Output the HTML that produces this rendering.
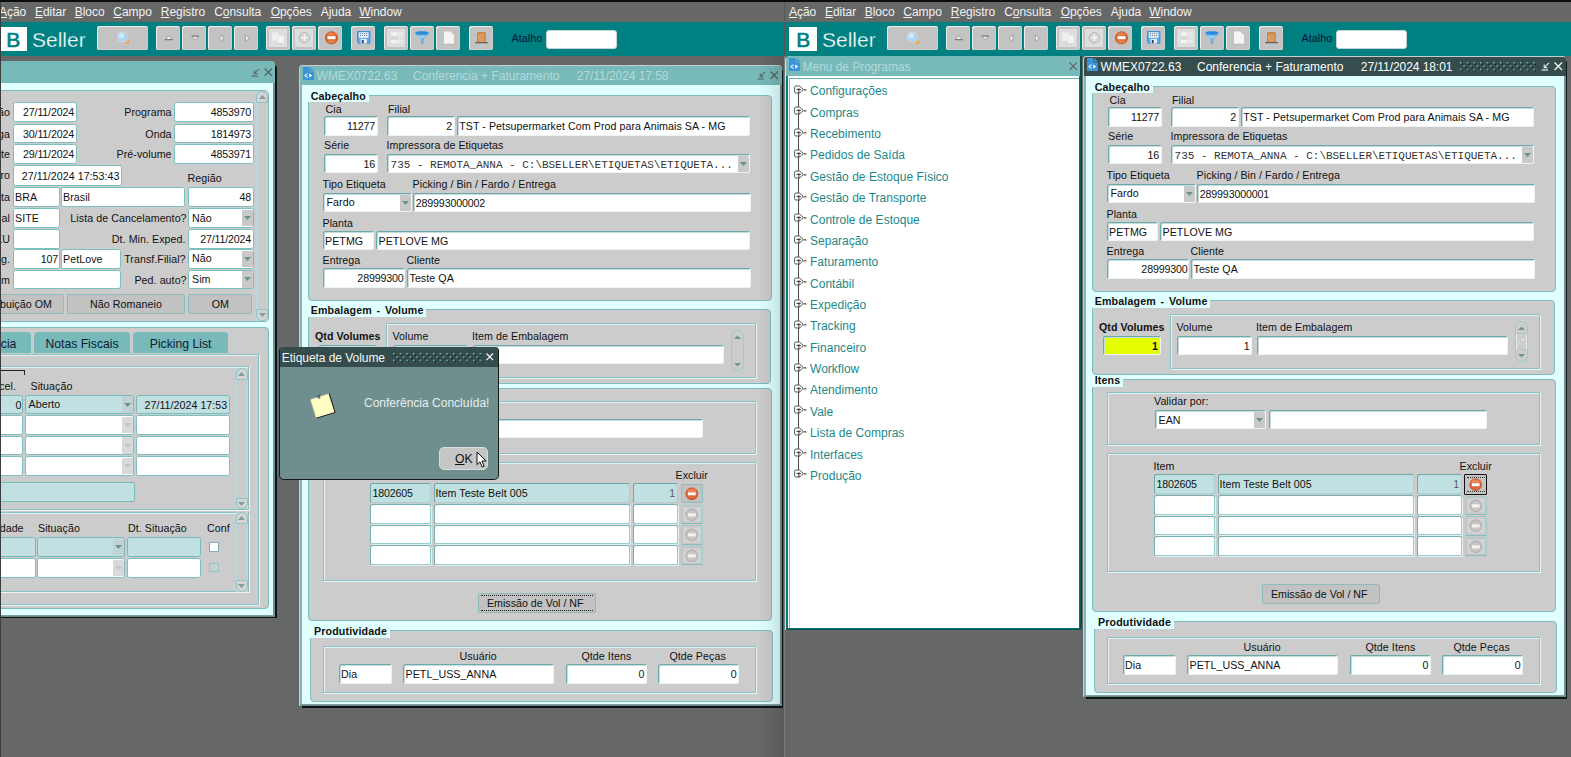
<!DOCTYPE html>
<html><head><meta charset="utf-8"><title>BSeller</title>
<style>
html,body{margin:0;padding:0;}
body{width:1571px;height:757px;overflow:hidden;background:#666867;position:relative;font-family:"Liberation Sans",sans-serif;font-size:11px;}
div,svg.a{position:absolute;}
.a{position:absolute;}
.t{white-space:nowrap;letter-spacing:0.06px;}
.m{font-family:"Liberation Mono",monospace;}
u{text-decoration:underline;text-underline-offset:1px;}
.f{box-sizing:border-box;background:#fff;border:1px solid;border-color:#6ea9a9 #eef4f4 #eef4f4 #6ea9a9;border-radius:2.5px;box-shadow:inset 1px 1px 0 #c4dede;}
.fm{box-sizing:border-box;background:#fff;border:1px solid;border-color:#74b0b0 #96cccc #96cccc #74b0b0;border-radius:2.5px;box-shadow:1px 1px 0 #e4eeee;}
.fs{box-sizing:border-box;background:#c1e0e1;border:1px solid;border-color:#6ea9a9 #a9d0d0 #a9d0d0 #6ea9a9;border-radius:2.5px;}
.g{box-sizing:border-box;background:#fff;border:1px solid #7cbfbf;border-radius:2.5px;}
.gs{box-sizing:border-box;background:#c1e0e1;border:1px solid #78baba;border-radius:2.5px;}
.gb{box-sizing:border-box;background:#cccccc;border:1px solid #7fbcbc;border-radius:4px;}
.fr{box-sizing:border-box;border:1px solid #86c2c2;border-radius:1px;box-shadow:inset 1px 1px 0 #e6f0f0,1px 1px 0 #eef4f4;}
.bt{box-sizing:border-box;background:#c2c2c2;border:1px solid #8cbcbc;border-radius:2px;}
.btd{box-sizing:border-box;background:#d3d3d3;border:1px solid #a2cccc;border-bottom-color:#84bcbc;border-radius:1.5px;box-shadow:inset 0 0 0 1.5px #c8c8c8;}
.ab{border-radius:0 1.5px 1.5px 0;}
.tb{background:#c3c3c3;border-radius:2.5px;box-shadow:inset 1px 1px 0 #ececec,inset -1px -1px 0 #cecece;}
.tbd{left:2.8px;top:2.8px;right:2.8px;bottom:2.8px;background:#dedede;}
</style></head><body>

<div class="a" style="left:0;top:0;width:783.6px;height:757px;overflow:hidden;">
<div class="a" style="left:-5.00px;top:0.00px;width:800.00px;height:757.00px;overflow:visible;">
<div style="left:0.00px;top:22.40px;width:800.00px;height:33.20px;background:#008080;"></div>
<div class="t" style="top:4.30px;font-size:12px;line-height:16px;color:#f2f2f2;letter-spacing:-0.04px;left:4.00px;"><u>A</u>ção</div>
<div class="t" style="top:4.30px;font-size:12px;line-height:16px;color:#f2f2f2;letter-spacing:-0.04px;left:40.00px;"><u>E</u>ditar</div>
<div class="t" style="top:4.30px;font-size:12px;line-height:16px;color:#f2f2f2;letter-spacing:-0.04px;left:79.70px;"><u>B</u>loco</div>
<div class="t" style="top:4.30px;font-size:12px;line-height:16px;color:#f2f2f2;letter-spacing:-0.04px;left:118.30px;"><u>C</u>ampo</div>
<div class="t" style="top:4.30px;font-size:12px;line-height:16px;color:#f2f2f2;letter-spacing:-0.04px;left:165.80px;"><u>R</u>egistro</div>
<div class="t" style="top:4.30px;font-size:12px;line-height:16px;color:#f2f2f2;letter-spacing:-0.04px;left:219.20px;">C<u>o</u>nsulta</div>
<div class="t" style="top:4.30px;font-size:12px;line-height:16px;color:#f2f2f2;letter-spacing:-0.04px;left:275.70px;"><u>O</u>pções</div>
<div class="t" style="top:4.30px;font-size:12px;line-height:16px;color:#f2f2f2;letter-spacing:-0.04px;left:325.70px;">Ajuda</div>
<div class="t" style="top:4.30px;font-size:12px;line-height:16px;color:#f2f2f2;letter-spacing:-0.04px;left:364.30px;"><u>W</u>indow</div>
<div style="left:4.00px;top:27.00px;width:28.00px;height:24.30px;background:#fff;"></div>
<div class="t" style="top:26.00px;font-size:21px;line-height:27px;color:#008080;left:-181.80px;width:400px;text-align:center;-webkit-text-stroke:0.7px #008080;">B</div>
<div class="t" style="top:26.00px;font-size:21px;line-height:27px;color:#fff;letter-spacing:0px;left:37.00px;-webkit-text-stroke:0.3px #008080;">Seller</div>
<div class="tb" style="left:102.00px;top:26.00px;width:51.00px;height:24.10px;"><svg class="a" style="left:17px;top:3px" width="18" height="18" viewBox="0 0 18 18"><path d="M11.4 11L12.8 12.4" stroke="#d8d4d4" stroke-width="2.2" stroke-linecap="round"/><circle cx="13.5" cy="13.2" r="1.9" fill="#e9a254"/><circle cx="13.1" cy="12.7" r=".8" fill="#f6cc94"/><circle cx="8.3" cy="8" r="5" fill="#a4d6f8" stroke="#d6d0d2" stroke-width="1.3"/><circle cx="7.3" cy="6.7" r="2.8" fill="#d2ecff" opacity=".85"/></svg></div>
<div class="tb" style="left:161.00px;top:26.00px;width:24.00px;height:24.10px;"><svg class="a" style="left:0px;top:0px" width="24" height="24" viewBox="0 0 24 24"><path d="M9.4 13.6L12.8 9.7L16.2 13.6Z" fill="#f4f4f4" stroke="#9c9c9c" stroke-width=".9" stroke-linejoin="round"/><path d="M9.2 13.7H16.4" stroke="#727272" stroke-width="1" stroke-linecap="round"/></svg></div>
<div class="tb" style="left:187.00px;top:26.00px;width:24.00px;height:24.10px;"><svg class="a" style="left:0px;top:0px" width="24" height="24" viewBox="0 0 24 24"><path d="M10 10.1H16.4L13.2 14Z" fill="#f4f4f4" stroke="#9c9c9c" stroke-width=".9" stroke-linejoin="round"/><path d="M10 10.1H16.4" stroke="#727272" stroke-width="1" stroke-linecap="round"/></svg></div>
<div class="tb" style="left:213.00px;top:26.00px;width:24.00px;height:24.10px;"><svg class="a" style="left:0px;top:0px" width="24" height="24" viewBox="0 0 24 24"><path d="M14.9 8.9V15.6L11 12.25Z" fill="#f4f4f4" stroke="#9c9c9c" stroke-width=".9" stroke-linejoin="round"/></svg></div>
<div class="tb" style="left:239.00px;top:26.00px;width:24.00px;height:24.10px;"><svg class="a" style="left:0px;top:0px" width="24" height="24" viewBox="0 0 24 24"><path d="M11.4 8.9V15.6L15.3 12.25Z" fill="#f4f4f4" stroke="#9c9c9c" stroke-width=".9" stroke-linejoin="round"/></svg></div>
<div class="tb" style="left:271.00px;top:26.00px;width:24.00px;height:24.10px;"><div class="tbd"></div><svg class="a" style="left:0px;top:0px" width="24" height="24" viewBox="0 0 24 24"><rect x="6" y="6.3" width="6.9" height="8.7" fill="#f0f0f0" stroke="#e2e2e2" stroke-width=".5"/><rect x="11.8" y="9.2" width="6.2" height="8" fill="#f3f3f3" stroke="#e0e0e0" stroke-width=".5"/><path d="M9 17.8H16" stroke="#d2d2d2" stroke-width=".8"/></svg></div>
<div class="tb" style="left:297.00px;top:26.00px;width:24.00px;height:24.10px;"><div class="tbd"></div><svg class="a" style="left:0px;top:0px" width="24" height="24" viewBox="0 0 24 24"><circle cx="12.4" cy="11.8" r="5.3" fill="#d2d4d4" stroke="#b6bcbc" stroke-width="1"/><path d="M9.1 11.8H15.7M12.4 8.5V15.1" stroke="#f8f8f8" stroke-width="1.6"/></svg></div>
<div class="tb" style="left:323.00px;top:26.00px;width:24.00px;height:24.10px;"><svg class="a" style="left:0px;top:0px" width="24" height="24" viewBox="0 0 24 24"><circle cx="13.5" cy="11.8" r="6.4" fill="#d9682f"/><circle cx="13.5" cy="11.8" r="5.9" fill="none" stroke="#c4581f" stroke-width="1"/><path d="M8.6 9.6A5.2 5.2 0 0 1 18.4 9.6Z" fill="#ea8a58" opacity=".7"/><path d="M9 14.6A5 5 0 0 0 18 14.6Z" fill="#e89a5c" opacity=".6"/><rect x="9.5" y="10.2" width="8" height="3" fill="#fff"/></svg></div>
<div class="tb" style="left:356.00px;top:26.00px;width:24.00px;height:24.10px;"><svg class="a" style="left:6.3px;top:5.3px" width="13.4" height="12.8" viewBox="0 0 13.4 12.8"><path d="M0.5 0.5H12.9V12.3H1.6L0.5 11.2Z" fill="#56aaf2" stroke="#3c8ee0" stroke-width="1"/><rect x="1.9" y="1.3" width="9.6" height="5.4" fill="#f6f9fc"/><path d="M2.8 2.7H10.6M2.8 4.6H10.6" stroke="#5c6470" stroke-width=".9" stroke-dasharray="1.3 .8"/><rect x="3.6" y="7.9" width="6.2" height="4.6" fill="#eef2f6"/><rect x="4.8" y="9" width="1.9" height="3.2" fill="#3c444e"/></svg></div>
<div class="tb" style="left:389.00px;top:26.00px;width:24.00px;height:24.10px;"><div class="tbd"></div><svg class="a" style="left:0px;top:0px" width="24" height="24" viewBox="0 0 24 24"><rect x="7" y="6.4" width="6.2" height="3.1" fill="#f4f4f4"/><rect x="14.3" y="6.4" width="4.2" height="3.1" fill="#f0f0f0"/><path d="M15.2 8.6L16.4 7.2L17.6 8.6Z" fill="#c8c8c8"/><rect x="7" y="11.4" width="6.2" height="1.1" fill="#c9c9c9"/><rect x="14.3" y="10.8" width="4.2" height="2" fill="#e6e6e6"/><rect x="7" y="14" width="6.2" height="3.1" fill="#f4f4f4"/><rect x="14.3" y="14" width="4.2" height="3.1" fill="#f0f0f0"/><path d="M15.2 15L16.4 16.4L17.6 15Z" fill="#c8c8c8"/></svg></div>
<div class="tb" style="left:415.00px;top:26.00px;width:24.00px;height:24.10px;"><svg class="a" style="left:0px;top:0px" width="24" height="24" viewBox="0 0 24 24"><path d="M5.1 6.8C5.1 4.8 18.9 4.8 18.9 6.8C18.9 8.4 14 11 13.6 13V17L11.4 18.2C11 18 10.8 17.4 10.8 16.8V13C10.4 11 5.1 8.4 5.1 6.8Z" fill="#3fa2ea"/><ellipse cx="12" cy="6.9" rx="6" ry="1.5" fill="#2e8ad8"/><path d="M7.6 8.8C10 9.8 14 9.8 16.4 8.8L13 12.4H11Z" fill="#a6daf8" opacity=".9"/><path d="M11.4 13H12.8V17L11.6 17.6Z" fill="#8fd0f8" opacity=".8"/></svg></div>
<div class="tb" style="left:441.00px;top:26.00px;width:24.00px;height:24.10px;"><svg class="a" style="left:0px;top:0px" width="24" height="24" viewBox="0 0 24 24"><path d="M8 17.6H18V18.4H8Z" fill="#b4acb4"/><path d="M8 5.6H14.6L18 9V17.8H8Z" fill="#f5f5f5"/><path d="M14.6 5.6V9H18Z" fill="#dcdcdc"/><path d="M14.6 5.6C14.6 7.8 15.8 9 18 9L14.6 9Z" fill="#fff"/></svg></div>
<div class="tb" style="left:474.00px;top:26.00px;width:24.00px;height:24.10px;"><svg class="a" style="left:0px;top:0px" width="24" height="24" viewBox="0 0 24 24"><path d="M8 16V7.6C8 6.6 8.8 6 9.6 6H15.2C16 6 16.8 6.6 16.8 7.6V16Z" fill="#c8824a"/><rect x="9.3" y="7.3" width="6.2" height="8.7" fill="#d9995f"/><rect x="9.4" y="10.6" width="1" height="2" fill="#f4d428"/><rect x="6.1" y="16" width="12.8" height="1.3" fill="#6c6262"/></svg></div>
<div class="t" style="top:31.00px;font-size:10.67px;line-height:14px;color:#04143c;left:516.60px;">Atalho</div>
<div style="left:550.50px;top:29.50px;width:71.00px;height:19.00px;background:#fff;border:1px solid #c8d4d4;border-radius:3px;box-sizing:border-box;"></div>
</div>
<div style="left:-10.00px;top:65.00px;width:286.80px;height:553.40px;background:#0c1414;border-radius:0 4px 0 0;"></div>
<div style="left:-10.00px;top:61.40px;width:285.30px;height:555.80px;background:linear-gradient(90deg,#8fb0b0 0,#8fb0b0 50%,#6f9090 100%);border-radius:0 4px 0 0;"></div>
<div style="left:-10.00px;top:83.00px;width:283.40px;height:532.20px;background:#e0ffff;"></div>
<div style="left:-10.00px;top:615.20px;width:285.30px;height:2.00px;background:linear-gradient(180deg,#8cacac,#5e7e7e);"></div>
<div style="left:-10.00px;top:61.40px;width:285.10px;height:21.60px;background:#78b9b9;border-radius:0 3.5px 0 0;"></div>
<svg class="a" style="left:250.5px;top:67.6px" width="9" height="9" viewBox="0 0 9 9"><path d="M0.5 8H7" stroke="#586868" stroke-width="1.2" fill="none"/><path d="M8 0.8L3.6 5.2M3.2 2.4V5.6H6.4" stroke="#586868" stroke-width="1.1" fill="none"/></svg>
<svg class="a" style="left:264px;top:67.8px" width="8.5" height="8.5" viewBox="0 0 8.5 8.5"><path d="M0.5 0.5L8.0 8.0M8.0 0.5L0.5 8.0" stroke="#566" stroke-width="1.3" fill="none"/></svg>
<div class="gb" style="left:-10.00px;top:90.40px;width:279.20px;height:231.60px;"></div>
<div class="g" style="left:13.00px;top:102.40px;width:63.50px;height:19.80px;"></div>
<div class="t" style="top:105.30px;font-size:10.67px;line-height:14px;color:#111;letter-spacing:-0.16px;left:-326.00px;width:400px;text-align:right;">27/11/2024</div>
<div class="t" style="top:105.40px;font-size:10.67px;line-height:14px;color:#111;left:-390.00px;width:400px;text-align:right;">ão</div>
<div class="t" style="top:105.40px;font-size:10.67px;line-height:14px;color:#111;left:-228.40px;width:400px;text-align:right;">Programa</div>
<div class="g" style="left:173.50px;top:102.40px;width:80.10px;height:19.80px;"></div>
<div class="t" style="top:105.30px;font-size:10.67px;line-height:14px;color:#111;letter-spacing:-0.16px;left:-148.90px;width:400px;text-align:right;">4853970</div>
<div class="g" style="left:13.00px;top:123.60px;width:63.50px;height:19.80px;"></div>
<div class="t" style="top:126.50px;font-size:10.67px;line-height:14px;color:#111;letter-spacing:-0.16px;left:-326.00px;width:400px;text-align:right;">30/11/2024</div>
<div class="t" style="top:126.60px;font-size:10.67px;line-height:14px;color:#111;left:-390.00px;width:400px;text-align:right;">ga</div>
<div class="t" style="top:126.60px;font-size:10.67px;line-height:14px;color:#111;left:-228.40px;width:400px;text-align:right;">Onda</div>
<div class="g" style="left:173.50px;top:123.60px;width:80.10px;height:19.80px;"></div>
<div class="t" style="top:126.50px;font-size:10.67px;line-height:14px;color:#111;letter-spacing:-0.16px;left:-148.90px;width:400px;text-align:right;">1814973</div>
<div class="g" style="left:13.00px;top:144.40px;width:63.50px;height:19.80px;"></div>
<div class="t" style="top:147.30px;font-size:10.67px;line-height:14px;color:#111;letter-spacing:-0.16px;left:-326.00px;width:400px;text-align:right;">29/11/2024</div>
<div class="t" style="top:147.40px;font-size:10.67px;line-height:14px;color:#111;left:-390.00px;width:400px;text-align:right;">te</div>
<div class="t" style="top:147.40px;font-size:10.67px;line-height:14px;color:#111;left:-228.40px;width:400px;text-align:right;">Pré-volume</div>
<div class="g" style="left:173.50px;top:144.40px;width:80.10px;height:19.80px;"></div>
<div class="t" style="top:147.30px;font-size:10.67px;line-height:14px;color:#111;letter-spacing:-0.16px;left:-148.90px;width:400px;text-align:right;">4853971</div>
<div class="g" style="left:13.00px;top:165.20px;width:108.60px;height:20.80px;"></div>
<div class="t" style="top:169.00px;font-size:10.67px;line-height:14px;color:#111;letter-spacing:0.03px;left:-280.60px;width:400px;text-align:right;">27/11/2024 17:53:43</div>
<div class="t" style="top:168.20px;font-size:10.67px;line-height:14px;color:#111;left:-390.00px;width:400px;text-align:right;">ro</div>
<div class="t" style="top:171.40px;font-size:10.67px;line-height:14px;color:#111;left:187.50px;">Região</div>
<div class="g" style="left:13.00px;top:187.40px;width:46.60px;height:19.80px;"></div>
<div class="t" style="top:190.30px;font-size:10.67px;line-height:14px;color:#111;left:15.00px;">BRA</div>
<div class="g" style="left:61.00px;top:187.40px;width:124.00px;height:19.80px;"></div>
<div class="t" style="top:190.30px;font-size:10.67px;line-height:14px;color:#111;left:63.00px;">Brasil</div>
<div class="g" style="left:188.00px;top:187.40px;width:65.60px;height:19.80px;"></div>
<div class="t" style="top:190.30px;font-size:10.67px;line-height:14px;color:#111;letter-spacing:-0.16px;left:-148.90px;width:400px;text-align:right;">48</div>
<div class="t" style="top:190.40px;font-size:10.67px;line-height:14px;color:#111;left:-390.00px;width:400px;text-align:right;">ta</div>
<div class="g" style="left:13.00px;top:208.20px;width:46.60px;height:19.80px;"></div>
<div class="t" style="top:211.10px;font-size:10.67px;line-height:14px;color:#111;left:15.00px;">SITE</div>
<div class="t" style="top:211.20px;font-size:10.67px;line-height:14px;color:#111;left:-213.40px;width:400px;text-align:right;">Lista de Cancelamento?</div>
<div class="g" style="left:188.00px;top:208.20px;width:65.60px;height:19.80px;"></div>
<div class="ab" style="left:241.60px;top:209.70px;width:11.00px;height:16.80px;background:#c9c9c9;"><svg width="7" height="4" viewBox="0 0 7 4" style="position:absolute;left:50%;top:50%;margin:-2px 0 0 -3.5px"><path d="M0 0H7L3.5 4Z" fill="#6f9090"/></svg></div>
<div class="t" style="top:210.60px;font-size:10.67px;line-height:14px;color:#111;left:192.00px;">Não</div>
<div class="t" style="top:211.20px;font-size:10.67px;line-height:14px;color:#111;left:-390.00px;width:400px;text-align:right;">al</div>
<div class="g" style="left:13.00px;top:229.00px;width:46.60px;height:19.80px;"></div>
<div class="t" style="top:232.00px;font-size:10.67px;line-height:14px;color:#111;left:-214.40px;width:400px;text-align:right;">Dt. Min. Exped.</div>
<div class="g" style="left:188.00px;top:229.00px;width:65.60px;height:19.80px;"></div>
<div class="t" style="top:231.90px;font-size:10.67px;line-height:14px;color:#111;letter-spacing:-0.16px;left:-148.90px;width:400px;text-align:right;">27/11/2024</div>
<div class="t" style="top:232.00px;font-size:10.67px;line-height:14px;color:#111;left:-390.00px;width:400px;text-align:right;">KU</div>
<div class="g" style="left:13.00px;top:249.00px;width:46.60px;height:19.80px;"></div>
<div class="t" style="top:251.90px;font-size:10.67px;line-height:14px;color:#111;letter-spacing:-0.16px;left:-341.90px;width:400px;text-align:right;">107</div>
<div class="g" style="left:61.00px;top:249.00px;width:59.60px;height:19.80px;"></div>
<div class="t" style="top:251.90px;font-size:10.67px;line-height:14px;color:#111;left:63.00px;">PetLove</div>
<div class="t" style="top:252.00px;font-size:10.67px;line-height:14px;color:#111;left:-214.40px;width:400px;text-align:right;">Transf.Filial?</div>
<div class="g" style="left:188.00px;top:249.00px;width:65.60px;height:19.80px;"></div>
<div class="ab" style="left:241.60px;top:250.50px;width:11.00px;height:16.80px;background:#c9c9c9;"><svg width="7" height="4" viewBox="0 0 7 4" style="position:absolute;left:50%;top:50%;margin:-2px 0 0 -3.5px"><path d="M0 0H7L3.5 4Z" fill="#6f9090"/></svg></div>
<div class="t" style="top:251.40px;font-size:10.67px;line-height:14px;color:#111;left:192.00px;">Não</div>
<div class="t" style="top:252.00px;font-size:10.67px;line-height:14px;color:#111;left:-390.00px;width:400px;text-align:right;">g.</div>
<div class="g" style="left:13.00px;top:269.60px;width:107.60px;height:19.80px;"></div>
<div class="t" style="top:272.60px;font-size:10.67px;line-height:14px;color:#111;left:-213.40px;width:400px;text-align:right;">Ped. auto?</div>
<div class="g" style="left:188.00px;top:269.60px;width:65.60px;height:19.80px;"></div>
<div class="ab" style="left:241.60px;top:271.10px;width:11.00px;height:16.80px;background:#c9c9c9;"><svg width="7" height="4" viewBox="0 0 7 4" style="position:absolute;left:50%;top:50%;margin:-2px 0 0 -3.5px"><path d="M0 0H7L3.5 4Z" fill="#6f9090"/></svg></div>
<div class="t" style="top:272.00px;font-size:10.67px;line-height:14px;color:#111;left:192.00px;">Sim</div>
<div class="t" style="top:272.60px;font-size:10.67px;line-height:14px;color:#111;left:-390.00px;width:400px;text-align:right;">m</div>
<div class="bt" style="left:-10.00px;top:294.40px;width:73.60px;height:19.20px;"></div>
<div class="t" style="top:297.00px;font-size:10.67px;line-height:14px;color:#111;left:-348.00px;width:400px;text-align:right;">buição OM</div>
<div class="bt" style="left:67.40px;top:294.40px;width:117.20px;height:19.20px;"></div>
<div class="t" style="top:297.00px;font-size:10.67px;line-height:14px;color:#111;left:-74.00px;width:400px;text-align:center;">Não Romaneio</div>
<div class="bt" style="left:188.40px;top:294.40px;width:63.80px;height:19.20px;"></div>
<div class="t" style="top:297.00px;font-size:10.67px;line-height:14px;color:#111;left:20.30px;width:400px;text-align:center;">OM</div>
<div style="left:256.00px;top:91.40px;width:12.20px;height:230.00px;background:#cbcbcb;border-left:1px solid #b4dcdc;border-right:1px solid #b4dcdc;box-sizing:border-box;"></div>
<div style="left:256.00px;top:91.40px;width:12.20px;height:11.20px;border:1px solid #8fc4c4;border-radius:6px 6px 0 0;background:#d4d4d4;box-sizing:border-box;"><svg width="7" height="4" viewBox="0 0 7 4" style="position:absolute;left:50%;top:50%;margin:-2px 0 0 -3.5px"><path d="M0 4L3.5 0L7 4Z" fill="#8a9a9a"/></svg></div>
<div style="left:256.00px;top:309.00px;width:12.20px;height:12.40px;border:1px solid #8fc4c4;border-radius:0 0 6px 6px;background:#d4d4d4;box-sizing:border-box;"><svg width="7" height="4" viewBox="0 0 7 4" style="position:absolute;left:50%;top:50%;margin:-2px 0 0 -3.5px"><path d="M0 0H7L3.5 4Z" fill="#8a9a9a"/></svg></div>
<div class="gb" style="left:-10.00px;top:327.40px;width:279.20px;height:281.80px;"></div>
<div style="left:-10.00px;top:332.00px;width:41.00px;height:21.40px;background:#78b9b9;border-radius:4px 4px 0 0;"></div>
<div class="t" style="top:336.40px;font-size:12.2px;line-height:16px;color:#0c1c34;letter-spacing:0px;left:-200.00px;width:400px;text-align:center;"></div>
<div class="t" style="top:336.40px;font-size:12.2px;line-height:16px;color:#0c1c34;letter-spacing:0px;left:-383.60px;width:400px;text-align:right;">cia</div>
<div style="left:34.00px;top:332.00px;width:95.60px;height:21.40px;background:#78b9b9;border-radius:4px 4px 0 0;"></div>
<div class="t" style="top:336.40px;font-size:12.2px;line-height:16px;color:#0c1c34;letter-spacing:0px;left:-118.00px;width:400px;text-align:center;">Notas Fiscais</div>
<div style="left:132.60px;top:332.00px;width:95.00px;height:21.40px;background:#78b9b9;border-radius:4px 4px 0 0;"></div>
<div class="t" style="top:336.40px;font-size:12.2px;line-height:16px;color:#0c1c34;letter-spacing:0px;left:-19.40px;width:400px;text-align:center;">Picking List</div>
<div class="fr" style="left:-10.00px;top:353.60px;width:269.20px;height:251.00px;"></div>
<div class="fr" style="left:-10.00px;top:366.40px;width:259.20px;height:143.20px;border-radius:0;"></div>
<div class="fr" style="left:-10.00px;top:511.80px;width:259.20px;height:80.40px;border-radius:0;"></div>
<div style="left:-10.00px;top:369.60px;width:35.00px;height:1.00px;background:#222;"></div>
<div style="left:24.00px;top:369.60px;width:1.00px;height:5.20px;background:#222;"></div>
<div class="t" style="top:379.00px;font-size:10.67px;line-height:14px;color:#111;left:-384.00px;width:400px;text-align:right;">cel.</div>
<div class="t" style="top:379.00px;font-size:10.67px;line-height:14px;color:#111;left:30.50px;">Situação</div>
<div class="gs" style="left:-10.00px;top:394.80px;width:33.20px;height:19.60px;"></div>
<div class="t" style="top:397.80px;font-size:10.67px;line-height:14px;color:#111;letter-spacing:-0.16px;left:-378.80px;width:400px;text-align:right;">0</div>
<div class="gs" style="left:25.00px;top:394.80px;width:109.00px;height:19.60px;"></div>
<div class="ab" style="left:122.00px;top:396.30px;width:11.00px;height:16.60px;background:#c0d2d2;"><svg width="7" height="4" viewBox="0 0 7 4" style="position:absolute;left:50%;top:50%;margin:-2px 0 0 -3.5px"><path d="M0 0H7L3.5 4Z" fill="#6f9090"/></svg></div>
<div class="t" style="top:397.20px;font-size:10.67px;line-height:14px;color:#111;left:28.50px;">Aberto</div>
<div class="gs" style="left:135.60px;top:394.80px;width:94.00px;height:19.60px;"></div>
<div class="t" style="top:397.80px;font-size:10.67px;line-height:14px;color:#111;letter-spacing:0.03px;left:-172.80px;width:400px;text-align:right;">27/11/2024 17:53</div>
<div class="g" style="left:-10.00px;top:415.40px;width:33.20px;height:19.60px;"></div>
<div class="g" style="left:25.00px;top:415.40px;width:109.00px;height:19.60px;"></div>
<div class="ab" style="left:122.00px;top:416.90px;width:11.00px;height:16.60px;background:#d9d9d9;"><svg width="7" height="4" viewBox="0 0 7 4" style="position:absolute;left:50%;top:50%;margin:-2px 0 0 -3.5px"><path d="M0 0H7L3.5 4Z" fill="#c2c6c6"/></svg></div>
<div class="g" style="left:135.60px;top:415.40px;width:94.00px;height:19.60px;"></div>
<div class="g" style="left:-10.00px;top:435.80px;width:33.20px;height:19.60px;"></div>
<div class="g" style="left:25.00px;top:435.80px;width:109.00px;height:19.60px;"></div>
<div class="ab" style="left:122.00px;top:437.30px;width:11.00px;height:16.60px;background:#d9d9d9;"><svg width="7" height="4" viewBox="0 0 7 4" style="position:absolute;left:50%;top:50%;margin:-2px 0 0 -3.5px"><path d="M0 0H7L3.5 4Z" fill="#c2c6c6"/></svg></div>
<div class="g" style="left:135.60px;top:435.80px;width:94.00px;height:19.60px;"></div>
<div class="g" style="left:-10.00px;top:456.40px;width:33.20px;height:19.60px;"></div>
<div class="g" style="left:25.00px;top:456.40px;width:109.00px;height:19.60px;"></div>
<div class="ab" style="left:122.00px;top:457.90px;width:11.00px;height:16.60px;background:#d9d9d9;"><svg width="7" height="4" viewBox="0 0 7 4" style="position:absolute;left:50%;top:50%;margin:-2px 0 0 -3.5px"><path d="M0 0H7L3.5 4Z" fill="#c2c6c6"/></svg></div>
<div class="g" style="left:135.60px;top:456.40px;width:94.00px;height:19.60px;"></div>
<div class="gs" style="left:-10.00px;top:482.00px;width:144.60px;height:19.60px;"></div>
<div style="left:235.60px;top:368.40px;width:12.60px;height:140.60px;background:#cbcbcb;border-left:1px solid #b4dcdc;border-right:1px solid #b4dcdc;box-sizing:border-box;"></div>
<div style="left:235.60px;top:368.40px;width:12.60px;height:11.60px;border:1px solid #8fc4c4;border-radius:6px 6px 0 0;background:#d4d4d4;box-sizing:border-box;"><svg width="7" height="4" viewBox="0 0 7 4" style="position:absolute;left:50%;top:50%;margin:-2px 0 0 -3.5px"><path d="M0 4L3.5 0L7 4Z" fill="#8a9a9a"/></svg></div>
<div style="left:235.60px;top:498.40px;width:12.60px;height:10.80px;border:1px solid #8fc4c4;border-radius:0 0 6px 6px;background:#d4d4d4;box-sizing:border-box;"><svg width="7" height="4" viewBox="0 0 7 4" style="position:absolute;left:50%;top:50%;margin:-2px 0 0 -3.5px"><path d="M0 0H7L3.5 4Z" fill="#8a9a9a"/></svg></div>
<div style="left:235.60px;top:512.40px;width:12.60px;height:79.60px;background:#cbcbcb;border-left:1px solid #b4dcdc;border-right:1px solid #b4dcdc;box-sizing:border-box;"></div>
<div style="left:235.60px;top:512.40px;width:12.60px;height:11.20px;border:1px solid #8fc4c4;border-radius:6px 6px 0 0;background:#d4d4d4;box-sizing:border-box;"><svg width="7" height="4" viewBox="0 0 7 4" style="position:absolute;left:50%;top:50%;margin:-2px 0 0 -3.5px"><path d="M0 4L3.5 0L7 4Z" fill="#8a9a9a"/></svg></div>
<div style="left:235.60px;top:580.00px;width:12.60px;height:12.00px;border:1px solid #8fc4c4;border-radius:0 0 6px 6px;background:#d4d4d4;box-sizing:border-box;"><svg width="7" height="4" viewBox="0 0 7 4" style="position:absolute;left:50%;top:50%;margin:-2px 0 0 -3.5px"><path d="M0 0H7L3.5 4Z" fill="#8a9a9a"/></svg></div>
<div class="t" style="top:521.00px;font-size:10.67px;line-height:14px;color:#111;left:-376.40px;width:400px;text-align:right;">dade</div>
<div class="t" style="top:521.00px;font-size:10.67px;line-height:14px;color:#111;left:38.00px;">Situação</div>
<div class="t" style="top:521.00px;font-size:10.67px;line-height:14px;color:#111;left:128.00px;">Dt. Situação</div>
<div class="t" style="top:521.00px;font-size:10.67px;line-height:14px;color:#111;left:207.00px;">Conf</div>
<div class="gs" style="left:-10.00px;top:537.00px;width:45.60px;height:19.60px;"></div>
<div class="gs" style="left:37.00px;top:537.00px;width:88.00px;height:19.60px;"></div>
<div class="ab" style="left:113.00px;top:538.50px;width:11.00px;height:16.60px;background:#c0d2d2;"><svg width="7" height="4" viewBox="0 0 7 4" style="position:absolute;left:50%;top:50%;margin:-2px 0 0 -3.5px"><path d="M0 0H7L3.5 4Z" fill="#6f9090"/></svg></div>
<div class="gs" style="left:127.00px;top:537.00px;width:73.60px;height:19.60px;"></div>
<div style="left:209.40px;top:542.00px;width:9.80px;height:9.80px;background:#fff;border:1px solid #8ab;box-sizing:border-box;"></div>
<div class="g" style="left:-10.00px;top:558.00px;width:45.60px;height:19.60px;"></div>
<div class="g" style="left:37.00px;top:558.00px;width:88.00px;height:19.60px;"></div>
<div class="ab" style="left:113.00px;top:559.50px;width:11.00px;height:16.60px;background:#d9d9d9;"><svg width="7" height="4" viewBox="0 0 7 4" style="position:absolute;left:50%;top:50%;margin:-2px 0 0 -3.5px"><path d="M0 0H7L3.5 4Z" fill="#c2c6c6"/></svg></div>
<div class="g" style="left:127.00px;top:558.00px;width:73.60px;height:19.60px;"></div>
<div style="left:209.40px;top:562.60px;width:9.80px;height:9.80px;background:#c9d2d2;border:1px solid #8fc4c4;box-sizing:border-box;"></div>
<div class="a" style="left:-784px;top:9px;width:0;height:0;">
<div style="left:1086.00px;top:60.00px;width:481.20px;height:638.50px;background:#0c1414;border-radius:0 3px 0 0;"></div>
<div style="left:1083.00px;top:56.20px;width:483.00px;height:641.10px;background:#c6cece;border-radius:3.5px 3.5px 0 0;"></div>
<div style="left:1084.20px;top:57.00px;width:481.80px;height:640.30px;background:linear-gradient(90deg,#8fb0b0 0,#8fb0b0 50%,#6f9090 100%);border-radius:3px 3px 0 0;"></div>
<div style="left:1086.00px;top:75.60px;width:478.10px;height:619.60px;background:#e0ffff;"></div>
<div style="left:1084.20px;top:695.20px;width:481.80px;height:2.10px;background:linear-gradient(180deg,#8cacac,#5e7e7e);"></div>
<div style="left:1084.20px;top:57.00px;width:481.60px;height:18.60px;background:#78b9b9;border-radius:2.5px 2.5px 0 0;"></div>
<svg class="a" style="left:1087px;top:58px" width="11" height="13" viewBox="0 0 11 13"><path d="M0 0H6.5V4.5H11V13H0Z" fill="#3c94d6"/><path d="M7.3 0L11 3.7H7.3Z" fill="#3c94d6"/><path d="M6.2 6.6L9.2 8.6L6.2 10.6Z" fill="#fff"/><path d="M4.6 6.6L2 8.6L4.6 10.6" fill="none" stroke="#e8f2fb" stroke-width="1.1"/></svg>
<div class="t" style="top:59.00px;font-size:12px;line-height:16px;color:#b4dada;letter-spacing:0px;left:1100.60px;">WMEX0722.63</div>
<div class="t" style="top:59.00px;font-size:12px;line-height:16px;color:#b4dada;letter-spacing:0px;left:1197.00px;">Conferencia + Faturamento</div>
<div class="t" style="top:59.00px;font-size:12px;line-height:16px;color:#b4dada;letter-spacing:-0.06px;left:1360.80px;">27/11/2024 17:58</div>
<svg class="a" style="left:1541px;top:62px" width="9" height="9" viewBox="0 0 9 9"><path d="M0.5 8H7" stroke="#586868" stroke-width="1.2" fill="none"/><path d="M8 0.8L3.6 5.2M3.2 2.4V5.6H6.4" stroke="#586868" stroke-width="1.1" fill="none"/></svg>
<svg class="a" style="left:1554px;top:62.2px" width="8.5" height="8.5" viewBox="0 0 8.5 8.5"><path d="M0.5 0.5L8.0 8.0M8.0 0.5L0.5 8.0" stroke="#566" stroke-width="1.3" fill="none"/></svg>
<div class="gb" style="left:1092.30px;top:85.90px;width:464.00px;height:206.10px;"></div>
<div style="left:1091.30px;top:81.30px;width:61.40px;height:12.00px;background:#e0ffff;"></div>
<div class="t" style="top:79.80px;font-size:10.67px;line-height:14px;color:#111;font-weight:bold;letter-spacing:0.15px;left:1094.70px;">Cabeçalho</div>
<div class="t" style="top:92.60px;font-size:10.67px;line-height:14px;color:#111;left:1109.50px;">Cia</div>
<div class="t" style="top:92.60px;font-size:10.67px;line-height:14px;color:#111;left:1172.00px;">Filial</div>
<div class="f" style="left:1108.00px;top:107.20px;width:53.60px;height:19.40px;"></div>
<div class="t" style="top:109.80px;font-size:10.67px;line-height:14px;color:#111;letter-spacing:-0.16px;left:759.10px;width:400px;text-align:right;">11277</div>
<div class="f" style="left:1170.50px;top:107.20px;width:68.00px;height:19.40px;"></div>
<div class="t" style="top:109.80px;font-size:10.67px;line-height:14px;color:#111;letter-spacing:-0.16px;left:836.00px;width:400px;text-align:right;">2</div>
<div class="f" style="left:1240.70px;top:107.20px;width:292.90px;height:19.40px;"></div>
<div class="t" style="top:109.80px;font-size:10.67px;line-height:14px;color:#111;left:1243.20px;">TST - Petsupermarket Com Prod para Animais SA - MG</div>
<div class="t" style="top:129.20px;font-size:10.67px;line-height:14px;color:#111;left:1108.00px;">Série</div>
<div class="t" style="top:129.20px;font-size:10.67px;line-height:14px;color:#111;left:1170.50px;">Impressora de Etiquetas</div>
<div class="f" style="left:1108.00px;top:145.00px;width:53.60px;height:19.40px;"></div>
<div class="t" style="top:147.80px;font-size:10.67px;line-height:14px;color:#111;letter-spacing:-0.16px;left:759.10px;width:400px;text-align:right;">16</div>
<div class="f" style="left:1170.50px;top:145.00px;width:363.10px;height:19.40px;"></div>
<div class="ab" style="left:1521.60px;top:146.50px;width:11.00px;height:16.40px;background:#c9c9c9;"><svg width="7" height="4" viewBox="0 0 7 4" style="position:absolute;left:50%;top:50%;margin:-2px 0 0 -3.5px"><path d="M0 0H7L3.5 4Z" fill="#6f9090"/></svg></div>
<div class="t m" style="top:148.60px;font-size:11px;line-height:14px;color:#333;letter-spacing:-0.02px;left:1174.60px;">735 - REMOTA_ANNA - C:\BSELLER\ETIQUETAS\ETIQUETA...</div>
<div class="t" style="top:168.00px;font-size:10.67px;line-height:14px;color:#111;left:1106.50px;">Tipo Etiqueta</div>
<div class="t" style="top:168.00px;font-size:10.67px;line-height:14px;color:#111;left:1196.60px;">Picking / Bin / Fardo / Entrega</div>
<div class="f" style="left:1106.50px;top:184.00px;width:89.10px;height:19.40px;"></div>
<div class="ab" style="left:1183.60px;top:185.50px;width:11.00px;height:16.40px;background:#c9c9c9;"><svg width="7" height="4" viewBox="0 0 7 4" style="position:absolute;left:50%;top:50%;margin:-2px 0 0 -3.5px"><path d="M0 0H7L3.5 4Z" fill="#6f9090"/></svg></div>
<div class="t" style="top:186.40px;font-size:10.67px;line-height:14px;color:#111;left:1110.50px;">Fardo</div>
<div class="f" style="left:1197.30px;top:184.00px;width:337.70px;height:19.40px;"></div>
<div class="t" style="top:186.80px;font-size:10.67px;line-height:14px;color:#111;letter-spacing:-0.16px;left:1199.80px;">289993000002</div>
<div class="t" style="top:206.80px;font-size:10.67px;line-height:14px;color:#111;left:1106.50px;">Planta</div>
<div class="f" style="left:1106.50px;top:222.40px;width:51.50px;height:19.00px;"></div>
<div class="t" style="top:225.00px;font-size:10.67px;line-height:14px;color:#111;left:1109.00px;">PETMG</div>
<div class="f" style="left:1160.00px;top:222.40px;width:373.60px;height:19.00px;"></div>
<div class="t" style="top:225.00px;font-size:10.67px;line-height:14px;color:#111;left:1162.50px;">PETLOVE MG</div>
<div class="t" style="top:243.80px;font-size:10.67px;line-height:14px;color:#111;left:1106.50px;">Entrega</div>
<div class="t" style="top:243.80px;font-size:10.67px;line-height:14px;color:#111;left:1190.50px;">Cliente</div>
<div class="f" style="left:1106.50px;top:259.40px;width:82.50px;height:19.20px;"></div>
<div class="t" style="top:262.00px;font-size:10.67px;line-height:14px;color:#111;letter-spacing:-0.16px;left:787.50px;width:400px;text-align:right;">28999300</div>
<div class="f" style="left:1191.00px;top:259.40px;width:344.00px;height:19.20px;"></div>
<div class="t" style="top:262.00px;font-size:10.67px;line-height:14px;color:#111;left:1193.50px;">Teste QA</div>
<div class="gb" style="left:1092.30px;top:300.30px;width:462.90px;height:74.30px;"></div>
<div style="left:1091.30px;top:295.50px;width:118.40px;height:12.00px;background:#e0ffff;"></div>
<div class="t" style="top:294.00px;font-size:10.67px;line-height:14px;color:#111;font-weight:bold;letter-spacing:0.15px;left:1094.70px;word-spacing:1.6px;">Embalagem - Volume</div>
<div class="t" style="top:320.40px;font-size:10.67px;line-height:14px;color:#111;font-weight:bold;left:1099.00px;">Qtd Volumes</div>
<div class="f" style="left:1102.50px;top:336.40px;width:58.10px;height:18.80px;background:#c8f0a0;"></div>
<div class="fr" style="left:1169.80px;top:313.60px;width:369.80px;height:55.60px;"></div>
<div class="t" style="top:320.40px;font-size:10.67px;line-height:14px;color:#111;left:1176.50px;">Volume</div>
<div class="t" style="top:320.40px;font-size:10.67px;line-height:14px;color:#111;left:1256.00px;">Item de Embalagem</div>
<div class="f" style="left:1177.00px;top:336.40px;width:75.00px;height:18.80px;"></div>
<div class="f" style="left:1256.50px;top:336.40px;width:251.10px;height:18.80px;"></div>
<div style="left:1515.30px;top:321.20px;width:12.40px;height:40.80px;border:1px solid #9ccccc;border-radius:6.2px;background:#cccccc;box-sizing:border-box;"></div>
<svg class="a" style="left:1518px;top:325.6px" width="7" height="4" viewBox="0 0 7 4"><path d="M0 4L3.5 0.4L7 4Z" fill="#6e9494"/></svg>
<svg class="a" style="left:1518px;top:353.6px" width="7" height="4" viewBox="0 0 7 4"><path d="M0 0H7L3.5 3.6Z" fill="#6e9494"/></svg>
<div class="gb" style="left:1092.30px;top:379.30px;width:463.50px;height:233.10px;"></div>
<div style="left:1091.30px;top:374.50px;width:31.90px;height:12.00px;background:#e0ffff;"></div>
<div class="t" style="top:373.00px;font-size:10.67px;line-height:14px;color:#111;font-weight:bold;letter-spacing:0.15px;left:1094.70px;">Itens</div>
<div class="fr" style="left:1107.40px;top:392.40px;width:432.60px;height:52.20px;"></div>
<div class="t" style="top:394.40px;font-size:10.67px;line-height:14px;color:#111;left:1154.00px;">Validar por:</div>
<div class="f" style="left:1154.50px;top:410.40px;width:111.10px;height:18.80px;"></div>
<div class="ab" style="left:1253.60px;top:411.90px;width:11.00px;height:15.80px;background:#c9c9c9;"><svg width="7" height="4" viewBox="0 0 7 4" style="position:absolute;left:50%;top:50%;margin:-2px 0 0 -3.5px"><path d="M0 0H7L3.5 4Z" fill="#6f9090"/></svg></div>
<div class="t" style="top:412.80px;font-size:10.67px;line-height:14px;color:#111;left:1158.50px;">EAN</div>
<div class="f" style="left:1269.00px;top:410.40px;width:217.60px;height:18.80px;"></div>
<div class="fr" style="left:1107.40px;top:453.00px;width:432.60px;height:118.80px;"></div>
<div class="t" style="top:459.00px;font-size:10.67px;line-height:14px;color:#111;left:1153.50px;">Item</div>
<div class="t" style="top:459.00px;font-size:10.67px;line-height:14px;color:#111;left:1459.50px;">Excluir</div>
<div class="fs" style="left:1153.50px;top:474.40px;width:61.50px;height:19.40px;"></div>
<div class="t" style="top:477.20px;font-size:10.67px;line-height:14px;color:#111;letter-spacing:-0.16px;left:1156.50px;">1802605</div>
<div class="fs" style="left:1217.50px;top:474.40px;width:196.90px;height:19.40px;"></div>
<div class="t" style="top:477.20px;font-size:10.67px;line-height:14px;color:#111;left:1219.50px;">Item Teste Belt 005</div>
<div class="fs" style="left:1417.20px;top:474.40px;width:44.40px;height:19.40px;"></div>
<div class="t" style="top:477.20px;font-size:10.67px;line-height:14px;color:#5c5c5c;letter-spacing:-0.16px;left:1059.10px;width:400px;text-align:right;">1</div>
<div class="bt" style="left:1465.20px;top:474.60px;width:21.80px;height:19.60px;"></div>
<svg class="a" style="left:1469.2px;top:477.59999999999997px" width="13.6" height="13.6" viewBox="-6.8 -6.8 13.6 13.6"><circle r="6.3" fill="#dd6a3c"/><circle r="5.7" fill="none" stroke="#c4562a" stroke-width="1"/><ellipse cx="0" cy="-2.835" rx="4.409999999999999" ry="2.52" fill="#f09b72" opacity=".55"/><rect x="-3.9059999999999997" y="-1.386" width="7.811999999999999" height="2.898" fill="#fff"/></svg>
<div class="fm" style="left:1153.50px;top:495.40px;width:61.50px;height:19.40px;"></div>
<div class="fm" style="left:1217.50px;top:495.40px;width:196.90px;height:19.40px;"></div>
<div class="fm" style="left:1417.20px;top:495.40px;width:44.40px;height:19.40px;"></div>
<div class="btd" style="left:1465.20px;top:495.60px;width:21.80px;height:19.60px;"></div>
<svg class="a" style="left:1469.2px;top:498.59999999999997px" width="13.6" height="13.6" viewBox="-6.8 -6.8 13.6 13.6"><circle r="6.3" fill="#c6c6c6"/><circle r="5.7" fill="none" stroke="#b2b2b2" stroke-width="1.1"/><rect x="-3.9059999999999997" y="-1.512" width="7.811999999999999" height="3.15" fill="#f2f2f2"/></svg>
<div class="fm" style="left:1153.50px;top:516.00px;width:61.50px;height:19.40px;"></div>
<div class="fm" style="left:1217.50px;top:516.00px;width:196.90px;height:19.40px;"></div>
<div class="fm" style="left:1417.20px;top:516.00px;width:44.40px;height:19.40px;"></div>
<div class="btd" style="left:1465.20px;top:516.20px;width:21.80px;height:19.60px;"></div>
<svg class="a" style="left:1469.2px;top:519.2px" width="13.6" height="13.6" viewBox="-6.8 -6.8 13.6 13.6"><circle r="6.3" fill="#c6c6c6"/><circle r="5.7" fill="none" stroke="#b2b2b2" stroke-width="1.1"/><rect x="-3.9059999999999997" y="-1.512" width="7.811999999999999" height="3.15" fill="#f2f2f2"/></svg>
<div class="fm" style="left:1153.50px;top:536.40px;width:61.50px;height:19.40px;"></div>
<div class="fm" style="left:1217.50px;top:536.40px;width:196.90px;height:19.40px;"></div>
<div class="fm" style="left:1417.20px;top:536.40px;width:44.40px;height:19.40px;"></div>
<div class="btd" style="left:1465.20px;top:536.60px;width:21.80px;height:19.60px;"></div>
<svg class="a" style="left:1469.2px;top:539.6px" width="13.6" height="13.6" viewBox="-6.8 -6.8 13.6 13.6"><circle r="6.3" fill="#c6c6c6"/><circle r="5.7" fill="none" stroke="#b2b2b2" stroke-width="1.1"/><rect x="-3.9059999999999997" y="-1.512" width="7.811999999999999" height="3.15" fill="#f2f2f2"/></svg>
<div class="bt" style="left:1262.40px;top:584.00px;width:117.20px;height:19.60px;"></div>
<div style="left:1265.00px;top:585.60px;width:112.00px;height:16.40px;border-top:1px dotted #222;border-bottom:1px dotted #222;box-sizing:border-box;"></div>
<div class="t" style="top:586.60px;font-size:10.67px;line-height:14px;color:#111;letter-spacing:0px;left:1271.00px;">Emissão de Vol / NF</div>
<div class="gb" style="left:1094.00px;top:620.50px;width:463.00px;height:72.70px;"></div>
<div style="left:1093.00px;top:616.50px;width:80.50px;height:12.00px;background:#e0ffff;"></div>
<div class="t" style="top:615.00px;font-size:10.67px;line-height:14px;color:#111;font-weight:bold;letter-spacing:0.15px;left:1098.00px;">Produtividade</div>
<div class="fr" style="left:1107.40px;top:637.00px;width:432.60px;height:47.20px;"></div>
<div class="t" style="top:640.00px;font-size:10.67px;line-height:14px;color:#111;left:1243.60px;">Usuário</div>
<div class="t" style="top:640.00px;font-size:10.67px;line-height:14px;color:#111;left:1365.50px;">Qtde Itens</div>
<div class="t" style="top:640.00px;font-size:10.67px;line-height:14px;color:#111;left:1453.50px;">Qtde Peças</div>
<div class="f" style="left:1123.00px;top:655.40px;width:52.60px;height:19.60px;"></div>
<div class="t" style="top:658.00px;font-size:10.67px;line-height:14px;color:#111;left:1125.00px;">Dia</div>
<div class="f" style="left:1187.00px;top:655.40px;width:150.60px;height:19.60px;"></div>
<div class="t" style="top:658.00px;font-size:10.67px;line-height:14px;color:#111;left:1189.50px;">PETL_USS_ANNA</div>
<div class="f" style="left:1349.50px;top:655.40px;width:81.30px;height:19.60px;"></div>
<div class="t" style="top:658.00px;font-size:10.67px;line-height:14px;color:#111;letter-spacing:-0.16px;left:1028.30px;width:400px;text-align:right;">0</div>
<div class="f" style="left:1441.60px;top:655.40px;width:81.40px;height:19.60px;"></div>
<div class="t" style="top:658.00px;font-size:10.67px;line-height:14px;color:#111;letter-spacing:-0.16px;left:1120.50px;width:400px;text-align:right;">0</div>
</div>
<div style="left:279.20px;top:346.80px;width:219.70px;height:133.60px;background:#121a1a;border-radius:4px 4px 5px 5px;"></div>
<div style="left:280.00px;top:347.40px;width:217.60px;height:131.60px;background:#6f8f8f;border-radius:3px 3px 4px 4px;"></div>
<div style="left:280.00px;top:347.40px;width:217.60px;height:19.40px;background:#344c4c;border-radius:3px 3px 0 0;"></div>
<div class="t" style="top:349.80px;font-size:12px;line-height:16px;color:#f4f8f8;letter-spacing:-0.05px;left:281.80px;">Etiqueta de Volume</div>
<svg class="a" style="left:392.6px;top:353px" width="89.39999999999998" height="9.699999999999989"><defs><pattern id="dp392_353" width="6.66" height="6.66" patternUnits="userSpaceOnUse"><rect x="0" y="0" width="1.5" height="1.5" fill="#74c4c4"/><rect x="1.4" y="1.4" width="1.4" height="1.4" fill="#0c1a1a"/><rect x="3.33" y="3.33" width="1.5" height="1.5" fill="#74c4c4"/><rect x="4.73" y="4.73" width="1.4" height="1.4" fill="#0c1a1a"/></pattern></defs><rect width="89.39999999999998" height="9.699999999999989" fill="url(#dp392_353)"/></svg>
<svg class="a" style="left:486px;top:353.2px" width="7.6" height="7.6" viewBox="0 0 7.6 7.6"><path d="M0.5 0.5L7.1 7.1M7.1 0.5L0.5 7.1" stroke="#f4f8f8" stroke-width="1.2" fill="none"/></svg>
<svg class="a" style="left:307px;top:390px" width="32" height="32" viewBox="0 0 32 32"><g transform="rotate(-17.4 15.75 15.95)"><rect x="5.75" y="5.95" width="20" height="20" fill="#ffffc4"/><path d="M5.75 25.95V5.95H25.75" fill="none" stroke="#a8b0a0" stroke-width=".7"/><path d="M25.6 6V25.8H5.9" fill="none" stroke="#1c1c1c" stroke-width="1.1"/><circle cx="14.7" cy="6.9" r="1.6" fill="#a4a8a8"/><path d="M13.1 4.6L14.7 6.5L16.7 4.2" fill="none" stroke="#4a4a4a" stroke-width="1"/></g></svg>
<div class="t" style="top:394.60px;font-size:12px;line-height:16px;color:#e6eeee;letter-spacing:0px;left:364.00px;">Conferência Concluída!</div>
<div style="left:439.20px;top:446.60px;width:48.40px;height:23.20px;background:#c6c6c6;border:1px solid #dcdcdc;border-radius:5px;box-sizing:border-box;"></div>
<div class="t" style="top:451.20px;font-size:12.2px;line-height:16px;color:#111;letter-spacing:0px;left:455.00px;"><u>O</u>K</div>
<svg class="a" style="left:475.6px;top:451.4px" width="12" height="18" viewBox="0 0 12 18"><path d="M1 1V13.6L4 10.8L6.2 16L8.2 15.2L6 10H10.2Z" fill="#fff" stroke="#111" stroke-width="1" stroke-linejoin="round"/></svg>
<div style="left:757.00px;top:56.00px;width:26.60px;height:701.00px;background:linear-gradient(90deg,rgba(0,0,0,0),rgba(0,0,0,0.05) 50%,rgba(0,0,0,0.13));"></div>
<div style="left:0.00px;top:2.00px;width:1.20px;height:755.00px;background:#3c3e3d;"></div>
</div>
<div style="left:783.60px;top:2.00px;width:1.70px;height:54.00px;background:#555756;"></div>
<div style="left:783.60px;top:56.00px;width:1.70px;height:701.00px;background:#7c7c7c;"></div>
<div class="a" style="left:785px;top:0;width:786px;height:757px;overflow:hidden;"><div class="a" style="left:-785px;top:0;width:0;height:0;">
<div class="a" style="left:785.00px;top:0.00px;width:800.00px;height:757.00px;overflow:visible;">
<div style="left:0.00px;top:22.40px;width:800.00px;height:33.20px;background:#008080;"></div>
<div class="t" style="top:4.30px;font-size:12px;line-height:16px;color:#f2f2f2;letter-spacing:-0.04px;left:4.00px;"><u>A</u>ção</div>
<div class="t" style="top:4.30px;font-size:12px;line-height:16px;color:#f2f2f2;letter-spacing:-0.04px;left:40.00px;"><u>E</u>ditar</div>
<div class="t" style="top:4.30px;font-size:12px;line-height:16px;color:#f2f2f2;letter-spacing:-0.04px;left:79.70px;"><u>B</u>loco</div>
<div class="t" style="top:4.30px;font-size:12px;line-height:16px;color:#f2f2f2;letter-spacing:-0.04px;left:118.30px;"><u>C</u>ampo</div>
<div class="t" style="top:4.30px;font-size:12px;line-height:16px;color:#f2f2f2;letter-spacing:-0.04px;left:165.80px;"><u>R</u>egistro</div>
<div class="t" style="top:4.30px;font-size:12px;line-height:16px;color:#f2f2f2;letter-spacing:-0.04px;left:219.20px;">C<u>o</u>nsulta</div>
<div class="t" style="top:4.30px;font-size:12px;line-height:16px;color:#f2f2f2;letter-spacing:-0.04px;left:275.70px;"><u>O</u>pções</div>
<div class="t" style="top:4.30px;font-size:12px;line-height:16px;color:#f2f2f2;letter-spacing:-0.04px;left:325.70px;">Ajuda</div>
<div class="t" style="top:4.30px;font-size:12px;line-height:16px;color:#f2f2f2;letter-spacing:-0.04px;left:364.30px;"><u>W</u>indow</div>
<div style="left:4.00px;top:27.00px;width:28.00px;height:24.30px;background:#fff;"></div>
<div class="t" style="top:26.00px;font-size:21px;line-height:27px;color:#008080;left:-181.80px;width:400px;text-align:center;-webkit-text-stroke:0.7px #008080;">B</div>
<div class="t" style="top:26.00px;font-size:21px;line-height:27px;color:#fff;letter-spacing:0px;left:37.00px;-webkit-text-stroke:0.3px #008080;">Seller</div>
<div class="tb" style="left:102.00px;top:26.00px;width:51.00px;height:24.10px;"><svg class="a" style="left:17px;top:3px" width="18" height="18" viewBox="0 0 18 18"><path d="M11.4 11L12.8 12.4" stroke="#d8d4d4" stroke-width="2.2" stroke-linecap="round"/><circle cx="13.5" cy="13.2" r="1.9" fill="#e9a254"/><circle cx="13.1" cy="12.7" r=".8" fill="#f6cc94"/><circle cx="8.3" cy="8" r="5" fill="#a4d6f8" stroke="#d6d0d2" stroke-width="1.3"/><circle cx="7.3" cy="6.7" r="2.8" fill="#d2ecff" opacity=".85"/></svg></div>
<div class="tb" style="left:161.00px;top:26.00px;width:24.00px;height:24.10px;"><svg class="a" style="left:0px;top:0px" width="24" height="24" viewBox="0 0 24 24"><path d="M9.4 13.6L12.8 9.7L16.2 13.6Z" fill="#f4f4f4" stroke="#9c9c9c" stroke-width=".9" stroke-linejoin="round"/><path d="M9.2 13.7H16.4" stroke="#727272" stroke-width="1" stroke-linecap="round"/></svg></div>
<div class="tb" style="left:187.00px;top:26.00px;width:24.00px;height:24.10px;"><svg class="a" style="left:0px;top:0px" width="24" height="24" viewBox="0 0 24 24"><path d="M10 10.1H16.4L13.2 14Z" fill="#f4f4f4" stroke="#9c9c9c" stroke-width=".9" stroke-linejoin="round"/><path d="M10 10.1H16.4" stroke="#727272" stroke-width="1" stroke-linecap="round"/></svg></div>
<div class="tb" style="left:213.00px;top:26.00px;width:24.00px;height:24.10px;"><svg class="a" style="left:0px;top:0px" width="24" height="24" viewBox="0 0 24 24"><path d="M14.9 8.9V15.6L11 12.25Z" fill="#f4f4f4" stroke="#9c9c9c" stroke-width=".9" stroke-linejoin="round"/></svg></div>
<div class="tb" style="left:239.00px;top:26.00px;width:24.00px;height:24.10px;"><svg class="a" style="left:0px;top:0px" width="24" height="24" viewBox="0 0 24 24"><path d="M11.4 8.9V15.6L15.3 12.25Z" fill="#f4f4f4" stroke="#9c9c9c" stroke-width=".9" stroke-linejoin="round"/></svg></div>
<div class="tb" style="left:271.00px;top:26.00px;width:24.00px;height:24.10px;"><div class="tbd"></div><svg class="a" style="left:0px;top:0px" width="24" height="24" viewBox="0 0 24 24"><rect x="6" y="6.3" width="6.9" height="8.7" fill="#f0f0f0" stroke="#e2e2e2" stroke-width=".5"/><rect x="11.8" y="9.2" width="6.2" height="8" fill="#f3f3f3" stroke="#e0e0e0" stroke-width=".5"/><path d="M9 17.8H16" stroke="#d2d2d2" stroke-width=".8"/></svg></div>
<div class="tb" style="left:297.00px;top:26.00px;width:24.00px;height:24.10px;"><div class="tbd"></div><svg class="a" style="left:0px;top:0px" width="24" height="24" viewBox="0 0 24 24"><circle cx="12.4" cy="11.8" r="5.3" fill="#d2d4d4" stroke="#b6bcbc" stroke-width="1"/><path d="M9.1 11.8H15.7M12.4 8.5V15.1" stroke="#f8f8f8" stroke-width="1.6"/></svg></div>
<div class="tb" style="left:323.00px;top:26.00px;width:24.00px;height:24.10px;"><svg class="a" style="left:0px;top:0px" width="24" height="24" viewBox="0 0 24 24"><circle cx="13.5" cy="11.8" r="6.4" fill="#d9682f"/><circle cx="13.5" cy="11.8" r="5.9" fill="none" stroke="#c4581f" stroke-width="1"/><path d="M8.6 9.6A5.2 5.2 0 0 1 18.4 9.6Z" fill="#ea8a58" opacity=".7"/><path d="M9 14.6A5 5 0 0 0 18 14.6Z" fill="#e89a5c" opacity=".6"/><rect x="9.5" y="10.2" width="8" height="3" fill="#fff"/></svg></div>
<div class="tb" style="left:356.00px;top:26.00px;width:24.00px;height:24.10px;"><svg class="a" style="left:6.3px;top:5.3px" width="13.4" height="12.8" viewBox="0 0 13.4 12.8"><path d="M0.5 0.5H12.9V12.3H1.6L0.5 11.2Z" fill="#56aaf2" stroke="#3c8ee0" stroke-width="1"/><rect x="1.9" y="1.3" width="9.6" height="5.4" fill="#f6f9fc"/><path d="M2.8 2.7H10.6M2.8 4.6H10.6" stroke="#5c6470" stroke-width=".9" stroke-dasharray="1.3 .8"/><rect x="3.6" y="7.9" width="6.2" height="4.6" fill="#eef2f6"/><rect x="4.8" y="9" width="1.9" height="3.2" fill="#3c444e"/></svg></div>
<div class="tb" style="left:389.00px;top:26.00px;width:24.00px;height:24.10px;"><div class="tbd"></div><svg class="a" style="left:0px;top:0px" width="24" height="24" viewBox="0 0 24 24"><rect x="7" y="6.4" width="6.2" height="3.1" fill="#f4f4f4"/><rect x="14.3" y="6.4" width="4.2" height="3.1" fill="#f0f0f0"/><path d="M15.2 8.6L16.4 7.2L17.6 8.6Z" fill="#c8c8c8"/><rect x="7" y="11.4" width="6.2" height="1.1" fill="#c9c9c9"/><rect x="14.3" y="10.8" width="4.2" height="2" fill="#e6e6e6"/><rect x="7" y="14" width="6.2" height="3.1" fill="#f4f4f4"/><rect x="14.3" y="14" width="4.2" height="3.1" fill="#f0f0f0"/><path d="M15.2 15L16.4 16.4L17.6 15Z" fill="#c8c8c8"/></svg></div>
<div class="tb" style="left:415.00px;top:26.00px;width:24.00px;height:24.10px;"><svg class="a" style="left:0px;top:0px" width="24" height="24" viewBox="0 0 24 24"><path d="M5.1 6.8C5.1 4.8 18.9 4.8 18.9 6.8C18.9 8.4 14 11 13.6 13V17L11.4 18.2C11 18 10.8 17.4 10.8 16.8V13C10.4 11 5.1 8.4 5.1 6.8Z" fill="#3fa2ea"/><ellipse cx="12" cy="6.9" rx="6" ry="1.5" fill="#2e8ad8"/><path d="M7.6 8.8C10 9.8 14 9.8 16.4 8.8L13 12.4H11Z" fill="#a6daf8" opacity=".9"/><path d="M11.4 13H12.8V17L11.6 17.6Z" fill="#8fd0f8" opacity=".8"/></svg></div>
<div class="tb" style="left:441.00px;top:26.00px;width:24.00px;height:24.10px;"><svg class="a" style="left:0px;top:0px" width="24" height="24" viewBox="0 0 24 24"><path d="M8 17.6H18V18.4H8Z" fill="#b4acb4"/><path d="M8 5.6H14.6L18 9V17.8H8Z" fill="#f5f5f5"/><path d="M14.6 5.6V9H18Z" fill="#dcdcdc"/><path d="M14.6 5.6C14.6 7.8 15.8 9 18 9L14.6 9Z" fill="#fff"/></svg></div>
<div class="tb" style="left:474.00px;top:26.00px;width:24.00px;height:24.10px;"><svg class="a" style="left:0px;top:0px" width="24" height="24" viewBox="0 0 24 24"><path d="M8 16V7.6C8 6.6 8.8 6 9.6 6H15.2C16 6 16.8 6.6 16.8 7.6V16Z" fill="#c8824a"/><rect x="9.3" y="7.3" width="6.2" height="8.7" fill="#d9995f"/><rect x="9.4" y="10.6" width="1" height="2" fill="#f4d428"/><rect x="6.1" y="16" width="12.8" height="1.3" fill="#6c6262"/></svg></div>
<div class="t" style="top:31.00px;font-size:10.67px;line-height:14px;color:#04143c;left:516.60px;">Atalho</div>
<div style="left:550.50px;top:29.50px;width:71.00px;height:19.00px;background:#fff;border:1px solid #c8d4d4;border-radius:3px;box-sizing:border-box;"></div>
</div>
<div style="left:785.30px;top:55.80px;width:296.40px;height:574.40px;background:linear-gradient(90deg,#d4dcdc 0,#d4dcdc 0.7px,#008080 0.7px,#008080 294px,#0a4848 296px);border-radius:4px 0 0 0;"></div>
<div style="left:786.00px;top:627.70px;width:295.70px;height:2.50px;background:linear-gradient(180deg,#008080,#0a4444);"></div>
<div style="left:787.80px;top:56.40px;width:291.20px;height:571.30px;background:#fff;"></div>
<div style="left:786.00px;top:56.40px;width:293.80px;height:19.20px;background:#78b9b9;border-radius:3px 0 0 0;"></div>
<svg class="a" style="left:789px;top:58px" width="11" height="13" viewBox="0 0 11 13"><path d="M0 0H6.5V4.5H11V13H0Z" fill="#3c94d6"/><path d="M7.3 0L11 3.7H7.3Z" fill="#3c94d6"/><path d="M6.2 6.6L9.2 8.6L6.2 10.6Z" fill="#fff"/><path d="M4.6 6.6L2 8.6L4.6 10.6" fill="none" stroke="#e8f2fb" stroke-width="1.1"/></svg>
<div class="t" style="top:59.00px;font-size:12px;line-height:16px;color:#b4dada;letter-spacing:-0.05px;left:802.60px;">Menu de Programas</div>
<svg class="a" style="left:1068.8px;top:62px" width="8.5" height="8.5" viewBox="0 0 8.5 8.5"><path d="M0.5 0.5L8.0 8.0M8.0 0.5L0.5 8.0" stroke="#666" stroke-width="1.2" fill="none"/></svg>
<div style="left:789.20px;top:77.80px;width:289.80px;height:549.90px;border:1.8px solid #7cbcbc;border-top:1.2px solid #5fb0b0;border-right:none;border-bottom:none;box-sizing:border-box;background:#fff;"></div>
<div style="left:797.90px;top:90.40px;width:1.10px;height:384.48px;background:#4a4a4a;"></div>
<svg class="a" style="left:793.5px;top:85.00px" width="13" height="9" viewBox="0 0 13 9"><path d="M1.8 1H5.6L9 4.2V4.8L5.6 8H1.8C1.1 8 0.6 7.5 0.6 6.8V2.2C0.6 1.5 1.1 1 1.8 1Z" fill="#fff" stroke="#555" stroke-width="1" stroke-linejoin="round"/><path d="M2.6 4.4H6.8M4.9 3.4V8.4" stroke="#333" stroke-width="1" fill="none"/><path d="M9.6 4.9H12.4" stroke="#222" stroke-width="1"/></svg>
<div class="t" style="top:83.40px;font-size:12px;line-height:16px;color:#1d8888;letter-spacing:0.02px;left:810.00px;">Configurações</div>
<svg class="a" style="left:793.5px;top:106.36px" width="13" height="9" viewBox="0 0 13 9"><path d="M1.8 1H5.6L9 4.2V4.8L5.6 8H1.8C1.1 8 0.6 7.5 0.6 6.8V2.2C0.6 1.5 1.1 1 1.8 1Z" fill="#fff" stroke="#555" stroke-width="1" stroke-linejoin="round"/><path d="M2.6 4.4H6.8M4.9 3.4V8.4" stroke="#333" stroke-width="1" fill="none"/><path d="M9.6 4.9H12.4" stroke="#222" stroke-width="1"/></svg>
<div class="t" style="top:104.76px;font-size:12px;line-height:16px;color:#1d8888;letter-spacing:0.02px;left:810.00px;">Compras</div>
<svg class="a" style="left:793.5px;top:127.72px" width="13" height="9" viewBox="0 0 13 9"><path d="M1.8 1H5.6L9 4.2V4.8L5.6 8H1.8C1.1 8 0.6 7.5 0.6 6.8V2.2C0.6 1.5 1.1 1 1.8 1Z" fill="#fff" stroke="#555" stroke-width="1" stroke-linejoin="round"/><path d="M2.6 4.4H6.8M4.9 3.4V8.4" stroke="#333" stroke-width="1" fill="none"/><path d="M9.6 4.9H12.4" stroke="#222" stroke-width="1"/></svg>
<div class="t" style="top:126.12px;font-size:12px;line-height:16px;color:#1d8888;letter-spacing:0.02px;left:810.00px;">Recebimento</div>
<svg class="a" style="left:793.5px;top:149.08px" width="13" height="9" viewBox="0 0 13 9"><path d="M1.8 1H5.6L9 4.2V4.8L5.6 8H1.8C1.1 8 0.6 7.5 0.6 6.8V2.2C0.6 1.5 1.1 1 1.8 1Z" fill="#fff" stroke="#555" stroke-width="1" stroke-linejoin="round"/><path d="M2.6 4.4H6.8M4.9 3.4V8.4" stroke="#333" stroke-width="1" fill="none"/><path d="M9.6 4.9H12.4" stroke="#222" stroke-width="1"/></svg>
<div class="t" style="top:147.48px;font-size:12px;line-height:16px;color:#1d8888;letter-spacing:0.02px;left:810.00px;">Pedidos de Saída</div>
<svg class="a" style="left:793.5px;top:170.44px" width="13" height="9" viewBox="0 0 13 9"><path d="M1.8 1H5.6L9 4.2V4.8L5.6 8H1.8C1.1 8 0.6 7.5 0.6 6.8V2.2C0.6 1.5 1.1 1 1.8 1Z" fill="#fff" stroke="#555" stroke-width="1" stroke-linejoin="round"/><path d="M2.6 4.4H6.8M4.9 3.4V8.4" stroke="#333" stroke-width="1" fill="none"/><path d="M9.6 4.9H12.4" stroke="#222" stroke-width="1"/></svg>
<div class="t" style="top:168.84px;font-size:12px;line-height:16px;color:#1d8888;letter-spacing:0.02px;left:810.00px;">Gestão de Estoque Físico</div>
<svg class="a" style="left:793.5px;top:191.80px" width="13" height="9" viewBox="0 0 13 9"><path d="M1.8 1H5.6L9 4.2V4.8L5.6 8H1.8C1.1 8 0.6 7.5 0.6 6.8V2.2C0.6 1.5 1.1 1 1.8 1Z" fill="#fff" stroke="#555" stroke-width="1" stroke-linejoin="round"/><path d="M2.6 4.4H6.8M4.9 3.4V8.4" stroke="#333" stroke-width="1" fill="none"/><path d="M9.6 4.9H12.4" stroke="#222" stroke-width="1"/></svg>
<div class="t" style="top:190.20px;font-size:12px;line-height:16px;color:#1d8888;letter-spacing:0.02px;left:810.00px;">Gestão de Transporte</div>
<svg class="a" style="left:793.5px;top:213.16px" width="13" height="9" viewBox="0 0 13 9"><path d="M1.8 1H5.6L9 4.2V4.8L5.6 8H1.8C1.1 8 0.6 7.5 0.6 6.8V2.2C0.6 1.5 1.1 1 1.8 1Z" fill="#fff" stroke="#555" stroke-width="1" stroke-linejoin="round"/><path d="M2.6 4.4H6.8M4.9 3.4V8.4" stroke="#333" stroke-width="1" fill="none"/><path d="M9.6 4.9H12.4" stroke="#222" stroke-width="1"/></svg>
<div class="t" style="top:211.56px;font-size:12px;line-height:16px;color:#1d8888;letter-spacing:0.02px;left:810.00px;">Controle de Estoque</div>
<svg class="a" style="left:793.5px;top:234.52px" width="13" height="9" viewBox="0 0 13 9"><path d="M1.8 1H5.6L9 4.2V4.8L5.6 8H1.8C1.1 8 0.6 7.5 0.6 6.8V2.2C0.6 1.5 1.1 1 1.8 1Z" fill="#fff" stroke="#555" stroke-width="1" stroke-linejoin="round"/><path d="M2.6 4.4H6.8M4.9 3.4V8.4" stroke="#333" stroke-width="1" fill="none"/><path d="M9.6 4.9H12.4" stroke="#222" stroke-width="1"/></svg>
<div class="t" style="top:232.92px;font-size:12px;line-height:16px;color:#1d8888;letter-spacing:0.02px;left:810.00px;">Separação</div>
<svg class="a" style="left:793.5px;top:255.88px" width="13" height="9" viewBox="0 0 13 9"><path d="M1.8 1H5.6L9 4.2V4.8L5.6 8H1.8C1.1 8 0.6 7.5 0.6 6.8V2.2C0.6 1.5 1.1 1 1.8 1Z" fill="#fff" stroke="#555" stroke-width="1" stroke-linejoin="round"/><path d="M2.6 4.4H6.8M4.9 3.4V8.4" stroke="#333" stroke-width="1" fill="none"/><path d="M9.6 4.9H12.4" stroke="#222" stroke-width="1"/></svg>
<div class="t" style="top:254.28px;font-size:12px;line-height:16px;color:#1d8888;letter-spacing:0.02px;left:810.00px;">Faturamento</div>
<svg class="a" style="left:793.5px;top:277.24px" width="13" height="9" viewBox="0 0 13 9"><path d="M1.8 1H5.6L9 4.2V4.8L5.6 8H1.8C1.1 8 0.6 7.5 0.6 6.8V2.2C0.6 1.5 1.1 1 1.8 1Z" fill="#fff" stroke="#555" stroke-width="1" stroke-linejoin="round"/><path d="M2.6 4.4H6.8M4.9 3.4V8.4" stroke="#333" stroke-width="1" fill="none"/><path d="M9.6 4.9H12.4" stroke="#222" stroke-width="1"/></svg>
<div class="t" style="top:275.64px;font-size:12px;line-height:16px;color:#1d8888;letter-spacing:0.02px;left:810.00px;">Contábil</div>
<svg class="a" style="left:793.5px;top:298.60px" width="13" height="9" viewBox="0 0 13 9"><path d="M1.8 1H5.6L9 4.2V4.8L5.6 8H1.8C1.1 8 0.6 7.5 0.6 6.8V2.2C0.6 1.5 1.1 1 1.8 1Z" fill="#fff" stroke="#555" stroke-width="1" stroke-linejoin="round"/><path d="M2.6 4.4H6.8M4.9 3.4V8.4" stroke="#333" stroke-width="1" fill="none"/><path d="M9.6 4.9H12.4" stroke="#222" stroke-width="1"/></svg>
<div class="t" style="top:297.00px;font-size:12px;line-height:16px;color:#1d8888;letter-spacing:0.02px;left:810.00px;">Expedição</div>
<svg class="a" style="left:793.5px;top:319.96px" width="13" height="9" viewBox="0 0 13 9"><path d="M1.8 1H5.6L9 4.2V4.8L5.6 8H1.8C1.1 8 0.6 7.5 0.6 6.8V2.2C0.6 1.5 1.1 1 1.8 1Z" fill="#fff" stroke="#555" stroke-width="1" stroke-linejoin="round"/><path d="M2.6 4.4H6.8M4.9 3.4V8.4" stroke="#333" stroke-width="1" fill="none"/><path d="M9.6 4.9H12.4" stroke="#222" stroke-width="1"/></svg>
<div class="t" style="top:318.36px;font-size:12px;line-height:16px;color:#1d8888;letter-spacing:0.02px;left:810.00px;">Tracking</div>
<svg class="a" style="left:793.5px;top:341.32px" width="13" height="9" viewBox="0 0 13 9"><path d="M1.8 1H5.6L9 4.2V4.8L5.6 8H1.8C1.1 8 0.6 7.5 0.6 6.8V2.2C0.6 1.5 1.1 1 1.8 1Z" fill="#fff" stroke="#555" stroke-width="1" stroke-linejoin="round"/><path d="M2.6 4.4H6.8M4.9 3.4V8.4" stroke="#333" stroke-width="1" fill="none"/><path d="M9.6 4.9H12.4" stroke="#222" stroke-width="1"/></svg>
<div class="t" style="top:339.72px;font-size:12px;line-height:16px;color:#1d8888;letter-spacing:0.02px;left:810.00px;">Financeiro</div>
<svg class="a" style="left:793.5px;top:362.68px" width="13" height="9" viewBox="0 0 13 9"><path d="M1.8 1H5.6L9 4.2V4.8L5.6 8H1.8C1.1 8 0.6 7.5 0.6 6.8V2.2C0.6 1.5 1.1 1 1.8 1Z" fill="#fff" stroke="#555" stroke-width="1" stroke-linejoin="round"/><path d="M2.6 4.4H6.8M4.9 3.4V8.4" stroke="#333" stroke-width="1" fill="none"/><path d="M9.6 4.9H12.4" stroke="#222" stroke-width="1"/></svg>
<div class="t" style="top:361.08px;font-size:12px;line-height:16px;color:#1d8888;letter-spacing:0.02px;left:810.00px;">Workflow</div>
<svg class="a" style="left:793.5px;top:384.04px" width="13" height="9" viewBox="0 0 13 9"><path d="M1.8 1H5.6L9 4.2V4.8L5.6 8H1.8C1.1 8 0.6 7.5 0.6 6.8V2.2C0.6 1.5 1.1 1 1.8 1Z" fill="#fff" stroke="#555" stroke-width="1" stroke-linejoin="round"/><path d="M2.6 4.4H6.8M4.9 3.4V8.4" stroke="#333" stroke-width="1" fill="none"/><path d="M9.6 4.9H12.4" stroke="#222" stroke-width="1"/></svg>
<div class="t" style="top:382.44px;font-size:12px;line-height:16px;color:#1d8888;letter-spacing:0.02px;left:810.00px;">Atendimento</div>
<svg class="a" style="left:793.5px;top:405.40px" width="13" height="9" viewBox="0 0 13 9"><path d="M1.8 1H5.6L9 4.2V4.8L5.6 8H1.8C1.1 8 0.6 7.5 0.6 6.8V2.2C0.6 1.5 1.1 1 1.8 1Z" fill="#fff" stroke="#555" stroke-width="1" stroke-linejoin="round"/><path d="M2.6 4.4H6.8M4.9 3.4V8.4" stroke="#333" stroke-width="1" fill="none"/><path d="M9.6 4.9H12.4" stroke="#222" stroke-width="1"/></svg>
<div class="t" style="top:403.80px;font-size:12px;line-height:16px;color:#1d8888;letter-spacing:0.02px;left:810.00px;">Vale</div>
<svg class="a" style="left:793.5px;top:426.76px" width="13" height="9" viewBox="0 0 13 9"><path d="M1.8 1H5.6L9 4.2V4.8L5.6 8H1.8C1.1 8 0.6 7.5 0.6 6.8V2.2C0.6 1.5 1.1 1 1.8 1Z" fill="#fff" stroke="#555" stroke-width="1" stroke-linejoin="round"/><path d="M2.6 4.4H6.8M4.9 3.4V8.4" stroke="#333" stroke-width="1" fill="none"/><path d="M9.6 4.9H12.4" stroke="#222" stroke-width="1"/></svg>
<div class="t" style="top:425.16px;font-size:12px;line-height:16px;color:#1d8888;letter-spacing:0.02px;left:810.00px;">Lista de Compras</div>
<svg class="a" style="left:793.5px;top:448.12px" width="13" height="9" viewBox="0 0 13 9"><path d="M1.8 1H5.6L9 4.2V4.8L5.6 8H1.8C1.1 8 0.6 7.5 0.6 6.8V2.2C0.6 1.5 1.1 1 1.8 1Z" fill="#fff" stroke="#555" stroke-width="1" stroke-linejoin="round"/><path d="M2.6 4.4H6.8M4.9 3.4V8.4" stroke="#333" stroke-width="1" fill="none"/><path d="M9.6 4.9H12.4" stroke="#222" stroke-width="1"/></svg>
<div class="t" style="top:446.52px;font-size:12px;line-height:16px;color:#1d8888;letter-spacing:0.02px;left:810.00px;">Interfaces</div>
<svg class="a" style="left:793.5px;top:469.48px" width="13" height="9" viewBox="0 0 13 9"><path d="M1.8 1H5.6L9 4.2V4.8L5.6 8H1.8C1.1 8 0.6 7.5 0.6 6.8V2.2C0.6 1.5 1.1 1 1.8 1Z" fill="#fff" stroke="#555" stroke-width="1" stroke-linejoin="round"/><path d="M2.6 4.4H6.8M4.9 3.4V8.4" stroke="#333" stroke-width="1" fill="none"/><path d="M9.6 4.9H12.4" stroke="#222" stroke-width="1"/></svg>
<div class="t" style="top:467.88px;font-size:12px;line-height:16px;color:#1d8888;letter-spacing:0.02px;left:810.00px;">Produção</div>
<div class="a" style="left:0px;top:0px;width:0;height:0;">
<div style="left:1086.00px;top:60.00px;width:481.20px;height:638.50px;background:#0c1414;border-radius:0 3px 0 0;"></div>
<div style="left:1083.00px;top:56.20px;width:483.00px;height:641.10px;background:#c6cece;border-radius:3.5px 3.5px 0 0;"></div>
<div style="left:1084.20px;top:57.00px;width:481.80px;height:640.30px;background:linear-gradient(90deg,#8fb0b0 0,#8fb0b0 50%,#6f9090 100%);border-radius:3px 3px 0 0;"></div>
<div style="left:1086.00px;top:75.60px;width:478.10px;height:619.60px;background:#e0ffff;"></div>
<div style="left:1084.20px;top:695.20px;width:481.80px;height:2.10px;background:linear-gradient(180deg,#8cacac,#5e7e7e);"></div>
<div style="left:1084.20px;top:57.00px;width:481.60px;height:18.60px;background:#354d4d;border-radius:2.5px 2.5px 0 0;"></div>
<svg class="a" style="left:1087px;top:58px" width="11" height="13" viewBox="0 0 11 13"><path d="M0 0H6.5V4.5H11V13H0Z" fill="#3c94d6"/><path d="M7.3 0L11 3.7H7.3Z" fill="#3c94d6"/><path d="M6.2 6.6L9.2 8.6L6.2 10.6Z" fill="#fff"/><path d="M4.6 6.6L2 8.6L4.6 10.6" fill="none" stroke="#e8f2fb" stroke-width="1.1"/></svg>
<div class="t" style="top:59.00px;font-size:12px;line-height:16px;color:#ffffff;letter-spacing:0px;left:1100.60px;">WMEX0722.63</div>
<div class="t" style="top:59.00px;font-size:12px;line-height:16px;color:#ffffff;letter-spacing:0px;left:1197.00px;">Conferencia + Faturamento</div>
<div class="t" style="top:59.00px;font-size:12px;line-height:16px;color:#ffffff;letter-spacing:-0.06px;left:1360.80px;">27/11/2024 18:01</div>
<svg class="a" style="left:1460px;top:62px" width="76" height="9.700000000000003"><defs><pattern id="dp1460_62" width="6.66" height="6.66" patternUnits="userSpaceOnUse"><rect x="0" y="0" width="1.5" height="1.5" fill="#74c4c4"/><rect x="1.4" y="1.4" width="1.4" height="1.4" fill="#0c1a1a"/><rect x="3.33" y="3.33" width="1.5" height="1.5" fill="#74c4c4"/><rect x="4.73" y="4.73" width="1.4" height="1.4" fill="#0c1a1a"/></pattern></defs><rect width="76" height="9.700000000000003" fill="url(#dp1460_62)"/></svg>
<svg class="a" style="left:1541px;top:62px" width="9" height="9" viewBox="0 0 9 9"><path d="M0.5 8H7" stroke="#e8eeee" stroke-width="1.2" fill="none"/><path d="M8 0.8L3.6 5.2M3.2 2.4V5.6H6.4" stroke="#e8eeee" stroke-width="1.1" fill="none"/></svg>
<svg class="a" style="left:1554px;top:62.2px" width="8.5" height="8.5" viewBox="0 0 8.5 8.5"><path d="M0.5 0.5L8.0 8.0M8.0 0.5L0.5 8.0" stroke="#f4f8f8" stroke-width="1.3" fill="none"/></svg>
<div class="gb" style="left:1092.30px;top:85.90px;width:464.00px;height:206.10px;"></div>
<div style="left:1091.30px;top:81.30px;width:61.40px;height:12.00px;background:#e0ffff;"></div>
<div class="t" style="top:79.80px;font-size:10.67px;line-height:14px;color:#111;font-weight:bold;letter-spacing:0.15px;left:1094.70px;">Cabeçalho</div>
<div class="t" style="top:92.60px;font-size:10.67px;line-height:14px;color:#111;left:1109.50px;">Cia</div>
<div class="t" style="top:92.60px;font-size:10.67px;line-height:14px;color:#111;left:1172.00px;">Filial</div>
<div class="f" style="left:1108.00px;top:107.20px;width:53.60px;height:19.40px;"></div>
<div class="t" style="top:109.80px;font-size:10.67px;line-height:14px;color:#111;letter-spacing:-0.16px;left:759.10px;width:400px;text-align:right;">11277</div>
<div class="f" style="left:1170.50px;top:107.20px;width:68.00px;height:19.40px;"></div>
<div class="t" style="top:109.80px;font-size:10.67px;line-height:14px;color:#111;letter-spacing:-0.16px;left:836.00px;width:400px;text-align:right;">2</div>
<div class="f" style="left:1240.70px;top:107.20px;width:292.90px;height:19.40px;"></div>
<div class="t" style="top:109.80px;font-size:10.67px;line-height:14px;color:#111;left:1243.20px;">TST - Petsupermarket Com Prod para Animais SA - MG</div>
<div class="t" style="top:129.20px;font-size:10.67px;line-height:14px;color:#111;left:1108.00px;">Série</div>
<div class="t" style="top:129.20px;font-size:10.67px;line-height:14px;color:#111;left:1170.50px;">Impressora de Etiquetas</div>
<div class="f" style="left:1108.00px;top:145.00px;width:53.60px;height:19.40px;"></div>
<div class="t" style="top:147.80px;font-size:10.67px;line-height:14px;color:#111;letter-spacing:-0.16px;left:759.10px;width:400px;text-align:right;">16</div>
<div class="f" style="left:1170.50px;top:145.00px;width:363.10px;height:19.40px;"></div>
<div class="ab" style="left:1521.60px;top:146.50px;width:11.00px;height:16.40px;background:#c9c9c9;"><svg width="7" height="4" viewBox="0 0 7 4" style="position:absolute;left:50%;top:50%;margin:-2px 0 0 -3.5px"><path d="M0 0H7L3.5 4Z" fill="#6f9090"/></svg></div>
<div class="t m" style="top:148.60px;font-size:11px;line-height:14px;color:#333;letter-spacing:-0.02px;left:1174.60px;">735 - REMOTA_ANNA - C:\BSELLER\ETIQUETAS\ETIQUETA...</div>
<div class="t" style="top:168.00px;font-size:10.67px;line-height:14px;color:#111;left:1106.50px;">Tipo Etiqueta</div>
<div class="t" style="top:168.00px;font-size:10.67px;line-height:14px;color:#111;left:1196.60px;">Picking / Bin / Fardo / Entrega</div>
<div class="f" style="left:1106.50px;top:184.00px;width:89.10px;height:19.40px;"></div>
<div class="ab" style="left:1183.60px;top:185.50px;width:11.00px;height:16.40px;background:#c9c9c9;"><svg width="7" height="4" viewBox="0 0 7 4" style="position:absolute;left:50%;top:50%;margin:-2px 0 0 -3.5px"><path d="M0 0H7L3.5 4Z" fill="#6f9090"/></svg></div>
<div class="t" style="top:186.40px;font-size:10.67px;line-height:14px;color:#111;left:1110.50px;">Fardo</div>
<div class="f" style="left:1197.30px;top:184.00px;width:337.70px;height:19.40px;"></div>
<div class="t" style="top:186.80px;font-size:10.67px;line-height:14px;color:#111;letter-spacing:-0.16px;left:1199.80px;">289993000001</div>
<div class="t" style="top:206.80px;font-size:10.67px;line-height:14px;color:#111;left:1106.50px;">Planta</div>
<div class="f" style="left:1106.50px;top:222.40px;width:51.50px;height:19.00px;"></div>
<div class="t" style="top:225.00px;font-size:10.67px;line-height:14px;color:#111;left:1109.00px;">PETMG</div>
<div class="f" style="left:1160.00px;top:222.40px;width:373.60px;height:19.00px;"></div>
<div class="t" style="top:225.00px;font-size:10.67px;line-height:14px;color:#111;left:1162.50px;">PETLOVE MG</div>
<div class="t" style="top:243.80px;font-size:10.67px;line-height:14px;color:#111;left:1106.50px;">Entrega</div>
<div class="t" style="top:243.80px;font-size:10.67px;line-height:14px;color:#111;left:1190.50px;">Cliente</div>
<div class="f" style="left:1106.50px;top:259.40px;width:82.50px;height:19.20px;"></div>
<div class="t" style="top:262.00px;font-size:10.67px;line-height:14px;color:#111;letter-spacing:-0.16px;left:787.50px;width:400px;text-align:right;">28999300</div>
<div class="f" style="left:1191.00px;top:259.40px;width:344.00px;height:19.20px;"></div>
<div class="t" style="top:262.00px;font-size:10.67px;line-height:14px;color:#111;left:1193.50px;">Teste QA</div>
<div class="gb" style="left:1092.30px;top:300.30px;width:462.90px;height:74.30px;"></div>
<div style="left:1091.30px;top:295.50px;width:118.40px;height:12.00px;background:#e0ffff;"></div>
<div class="t" style="top:294.00px;font-size:10.67px;line-height:14px;color:#111;font-weight:bold;letter-spacing:0.15px;left:1094.70px;word-spacing:1.6px;">Embalagem - Volume</div>
<div class="t" style="top:320.40px;font-size:10.67px;line-height:14px;color:#111;font-weight:bold;left:1099.00px;">Qtd Volumes</div>
<div class="f" style="left:1102.50px;top:336.40px;width:58.10px;height:18.80px;background:#e6ff00;"></div>
<div class="t" style="top:339.00px;font-size:10.67px;line-height:14px;color:#111;font-weight:bold;left:758.00px;width:400px;text-align:right;">1</div>
<div class="fr" style="left:1169.80px;top:313.60px;width:369.80px;height:55.60px;"></div>
<div class="t" style="top:320.40px;font-size:10.67px;line-height:14px;color:#111;left:1176.50px;">Volume</div>
<div class="t" style="top:320.40px;font-size:10.67px;line-height:14px;color:#111;left:1256.00px;">Item de Embalagem</div>
<div class="f" style="left:1177.00px;top:336.40px;width:75.00px;height:18.80px;"></div>
<div class="t" style="top:339.00px;font-size:10.67px;line-height:14px;color:#111;letter-spacing:-0.16px;left:849.50px;width:400px;text-align:right;">1</div>
<div class="f" style="left:1256.50px;top:336.40px;width:251.10px;height:18.80px;"></div>
<div style="left:1515.30px;top:321.20px;width:12.40px;height:40.80px;border:1px solid #9ccccc;border-radius:6.2px;background:#cccccc;box-sizing:border-box;"></div>
<div style="left:1516.30px;top:333.20px;width:10.40px;height:16.60px;border-left:1px solid #e4f0f0;border-right:1px solid #e4f0f0;border-top:1px solid #a8cccc;border-bottom:1px solid #a8cccc;background:#cdcdcd;box-sizing:border-box;"></div>
<svg class="a" style="left:1518px;top:325.6px" width="7" height="4" viewBox="0 0 7 4"><path d="M0 4L3.5 0.4L7 4Z" fill="#6e9494"/></svg>
<svg class="a" style="left:1518px;top:353.6px" width="7" height="4" viewBox="0 0 7 4"><path d="M0 0H7L3.5 3.6Z" fill="#6e9494"/></svg>
<div style="left:1519.00px;top:342.00px;width:1.40px;height:1.40px;background:#f4f8f8;"></div>
<div style="left:1522.40px;top:338.60px;width:1.40px;height:1.40px;background:#f4f8f8;"></div>
<div class="gb" style="left:1092.30px;top:379.30px;width:463.50px;height:233.10px;"></div>
<div style="left:1091.30px;top:374.50px;width:31.90px;height:12.00px;background:#e0ffff;"></div>
<div class="t" style="top:373.00px;font-size:10.67px;line-height:14px;color:#111;font-weight:bold;letter-spacing:0.15px;left:1094.70px;">Itens</div>
<div class="fr" style="left:1107.40px;top:392.40px;width:432.60px;height:52.20px;"></div>
<div class="t" style="top:394.40px;font-size:10.67px;line-height:14px;color:#111;left:1154.00px;">Validar por:</div>
<div class="f" style="left:1154.50px;top:410.40px;width:111.10px;height:18.80px;"></div>
<div class="ab" style="left:1253.60px;top:411.90px;width:11.00px;height:15.80px;background:#c9c9c9;"><svg width="7" height="4" viewBox="0 0 7 4" style="position:absolute;left:50%;top:50%;margin:-2px 0 0 -3.5px"><path d="M0 0H7L3.5 4Z" fill="#6f9090"/></svg></div>
<div class="t" style="top:412.80px;font-size:10.67px;line-height:14px;color:#111;left:1158.50px;">EAN</div>
<div class="f" style="left:1269.00px;top:410.40px;width:217.60px;height:18.80px;"></div>
<div class="fr" style="left:1107.40px;top:453.00px;width:432.60px;height:118.80px;"></div>
<div class="t" style="top:459.00px;font-size:10.67px;line-height:14px;color:#111;left:1153.50px;">Item</div>
<div class="t" style="top:459.00px;font-size:10.67px;line-height:14px;color:#111;left:1459.50px;">Excluir</div>
<div class="fs" style="left:1153.50px;top:474.40px;width:61.50px;height:19.40px;"></div>
<div class="t" style="top:477.20px;font-size:10.67px;line-height:14px;color:#111;letter-spacing:-0.16px;left:1156.50px;">1802605</div>
<div class="fs" style="left:1217.50px;top:474.40px;width:196.90px;height:19.40px;"></div>
<div class="t" style="top:477.20px;font-size:10.67px;line-height:14px;color:#111;left:1219.50px;">Item Teste Belt 005</div>
<div class="fs" style="left:1417.20px;top:474.40px;width:44.40px;height:19.40px;"></div>
<div class="t" style="top:477.20px;font-size:10.67px;line-height:14px;color:#5c5c5c;letter-spacing:-0.16px;left:1059.10px;width:400px;text-align:right;">1</div>
<div style="left:1464.40px;top:474.40px;width:22.80px;height:20.20px;background:#c4c4c4;border:1px solid #111;box-sizing:border-box;border-radius:1px;"></div>
<div style="left:1467.00px;top:476.80px;width:17.60px;height:15.40px;border-top:1px dotted #333;border-bottom:1px dotted #333;box-sizing:border-box;"></div>
<svg class="a" style="left:1469.1px;top:477.7px" width="13.4" height="13.4" viewBox="-6.7 -6.7 13.4 13.4"><circle r="6.2" fill="#dd6a3c"/><circle r="5.6000000000000005" fill="none" stroke="#c4562a" stroke-width="1"/><ellipse cx="0" cy="-2.79" rx="4.34" ry="2.4800000000000004" fill="#f09b72" opacity=".55"/><rect x="-3.844" y="-1.364" width="7.688" height="2.8520000000000003" fill="#fff"/></svg>
<div class="fm" style="left:1153.50px;top:495.40px;width:61.50px;height:19.40px;"></div>
<div class="fm" style="left:1217.50px;top:495.40px;width:196.90px;height:19.40px;"></div>
<div class="fm" style="left:1417.20px;top:495.40px;width:44.40px;height:19.40px;"></div>
<div class="btd" style="left:1465.20px;top:495.60px;width:21.80px;height:19.60px;"></div>
<svg class="a" style="left:1469.2px;top:498.59999999999997px" width="13.6" height="13.6" viewBox="-6.8 -6.8 13.6 13.6"><circle r="6.3" fill="#c6c6c6"/><circle r="5.7" fill="none" stroke="#b2b2b2" stroke-width="1.1"/><rect x="-3.9059999999999997" y="-1.512" width="7.811999999999999" height="3.15" fill="#f2f2f2"/></svg>
<div class="fm" style="left:1153.50px;top:516.00px;width:61.50px;height:19.40px;"></div>
<div class="fm" style="left:1217.50px;top:516.00px;width:196.90px;height:19.40px;"></div>
<div class="fm" style="left:1417.20px;top:516.00px;width:44.40px;height:19.40px;"></div>
<div class="btd" style="left:1465.20px;top:516.20px;width:21.80px;height:19.60px;"></div>
<svg class="a" style="left:1469.2px;top:519.2px" width="13.6" height="13.6" viewBox="-6.8 -6.8 13.6 13.6"><circle r="6.3" fill="#c6c6c6"/><circle r="5.7" fill="none" stroke="#b2b2b2" stroke-width="1.1"/><rect x="-3.9059999999999997" y="-1.512" width="7.811999999999999" height="3.15" fill="#f2f2f2"/></svg>
<div class="fm" style="left:1153.50px;top:536.40px;width:61.50px;height:19.40px;"></div>
<div class="fm" style="left:1217.50px;top:536.40px;width:196.90px;height:19.40px;"></div>
<div class="fm" style="left:1417.20px;top:536.40px;width:44.40px;height:19.40px;"></div>
<div class="btd" style="left:1465.20px;top:536.60px;width:21.80px;height:19.60px;"></div>
<svg class="a" style="left:1469.2px;top:539.6px" width="13.6" height="13.6" viewBox="-6.8 -6.8 13.6 13.6"><circle r="6.3" fill="#c6c6c6"/><circle r="5.7" fill="none" stroke="#b2b2b2" stroke-width="1.1"/><rect x="-3.9059999999999997" y="-1.512" width="7.811999999999999" height="3.15" fill="#f2f2f2"/></svg>
<div class="bt" style="left:1262.40px;top:584.00px;width:117.20px;height:19.60px;"></div>
<div class="t" style="top:586.60px;font-size:10.67px;line-height:14px;color:#111;letter-spacing:0px;left:1271.00px;">Emissão de Vol / NF</div>
<div class="gb" style="left:1094.00px;top:620.50px;width:463.00px;height:72.70px;"></div>
<div style="left:1093.00px;top:616.50px;width:80.50px;height:12.00px;background:#e0ffff;"></div>
<div class="t" style="top:615.00px;font-size:10.67px;line-height:14px;color:#111;font-weight:bold;letter-spacing:0.15px;left:1098.00px;">Produtividade</div>
<div class="fr" style="left:1107.40px;top:637.00px;width:432.60px;height:47.20px;"></div>
<div class="t" style="top:640.00px;font-size:10.67px;line-height:14px;color:#111;left:1243.60px;">Usuário</div>
<div class="t" style="top:640.00px;font-size:10.67px;line-height:14px;color:#111;left:1365.50px;">Qtde Itens</div>
<div class="t" style="top:640.00px;font-size:10.67px;line-height:14px;color:#111;left:1453.50px;">Qtde Peças</div>
<div class="f" style="left:1123.00px;top:655.40px;width:52.60px;height:19.60px;"></div>
<div class="t" style="top:658.00px;font-size:10.67px;line-height:14px;color:#111;left:1125.00px;">Dia</div>
<div class="f" style="left:1187.00px;top:655.40px;width:150.60px;height:19.60px;"></div>
<div class="t" style="top:658.00px;font-size:10.67px;line-height:14px;color:#111;left:1189.50px;">PETL_USS_ANNA</div>
<div class="f" style="left:1349.50px;top:655.40px;width:81.30px;height:19.60px;"></div>
<div class="t" style="top:658.00px;font-size:10.67px;line-height:14px;color:#111;letter-spacing:-0.16px;left:1028.30px;width:400px;text-align:right;">0</div>
<div class="f" style="left:1441.60px;top:655.40px;width:81.40px;height:19.60px;"></div>
<div class="t" style="top:658.00px;font-size:10.67px;line-height:14px;color:#111;letter-spacing:-0.16px;left:1120.50px;width:400px;text-align:right;">0</div>
</div>
</div></div>
<div style="left:0.00px;top:0.00px;width:1571.00px;height:2.00px;background:#0c0c0c;"></div>
</body></html>
